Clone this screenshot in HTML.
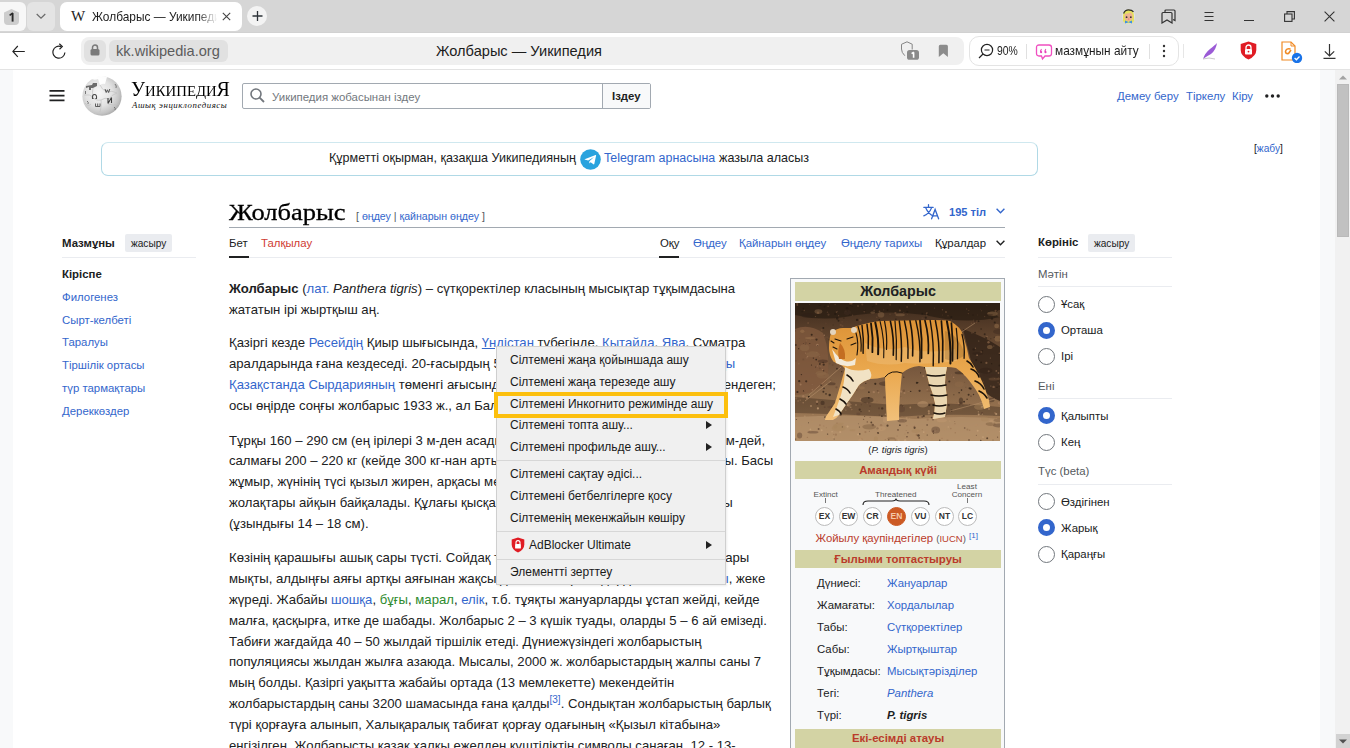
<!DOCTYPE html>
<html><head><meta charset="utf-8">
<style>
*{box-sizing:border-box;margin:0;padding:0}
html,body{width:1350px;height:748px;overflow:hidden;background:#fff}
body{position:relative;font-family:"Liberation Sans",sans-serif;color:#202122}
.a{position:absolute;white-space:nowrap}
a,.l{color:#3366cc;text-decoration:none}
.ln b{font-weight:bold}
.red{color:#ba0000}
/* chrome */
#tabbar{position:absolute;left:0;top:0;width:1350px;height:33px;background:#d6d6d6;border-bottom:1px solid #d1d1d1}
#toolbar{position:absolute;left:0;top:32.5px;width:1350px;height:36.5px;background:#fff;border-radius:6px 6px 0 0}
#tbsep{position:absolute;left:0;top:69px;width:1350px;height:1px;background:#e3e3e3}
#page{position:absolute;left:0;top:70px;width:1350px;height:678px;background:#fff;overflow:hidden}
.ln{position:absolute;left:229px;white-space:nowrap;font-size:13.14px;line-height:21px;height:21px}
.tx{font-size:13px}
.sb{font-size:11.4px}
.radio{position:absolute;width:17px;height:17px;border-radius:50%;border:1px solid #72777d;background:#fff}
.radio.on{border:5px solid #3366cc}
.mi{position:absolute;left:510px;font-size:12px;color:#1a1a1a;white-space:nowrap;line-height:14px}
.arr{position:absolute;left:706px;width:0;height:0;border-left:6px solid #222;border-top:4.5px solid transparent;border-bottom:4.5px solid transparent}
.msep{position:absolute;left:497px;width:228px;height:1px;background:#d7d7d7}
.ib-h{position:absolute;left:795px;width:206px;background:#d3d3a4;text-align:center;font-weight:bold;white-space:nowrap}
.ibl{position:absolute;left:817px;font-size:11.4px;white-space:nowrap}
.ibv{position:absolute;left:887px;font-size:11.4px;white-space:nowrap}
.circ{position:absolute;width:19px;height:19px;border-radius:50%;border:1px solid #bbb;background:#fff;font-size:8.5px;font-weight:bold;text-align:center;line-height:17px;color:#333}
</style></head><body>

<!-- TAB BAR -->
<div id="tabbar"></div>
<div class="a" style="left:0;top:2px;width:26px;height:29px;background:#f7f7f7;border-radius:0 6px 6px 0"></div>
<div class="a" style="left:27px;top:2px;width:28px;height:29px;background:#e4e4e4;border-radius:6px"></div>
<div class="a" style="left:60px;top:2px;width:182px;height:29px;background:#fff;border-radius:7px"></div>
<div id="toolbar"></div>
<div id="tbsep"></div>

<!-- tab count -->
<div class="a" style="left:4px;top:9px;width:15px;height:16px;background:#cdcdcd;border-radius:3px 3px 4px 4px;clip-path:polygon(50% 0,100% 22%,100% 100%,0 100%,0 22%)"></div>
<svg class="a" style="left:4px;top:9px" width="15" height="16" viewBox="0 0 15 16"><path d="M8.6 4.2 V12.6" stroke="#2a2a2a" stroke-width="1.9"/><path d="M8.9 4 L5.6 6.4" stroke="#2a2a2a" stroke-width="1.6"/></svg>
<svg class="a" style="left:36px;top:13px" width="10" height="7" viewBox="0 0 10 7"><path d="M0.7 1 L5 5.2 L9.3 1" fill="none" stroke="#6a6a6a" stroke-width="1.2"/></svg>
<!-- tab -->
<div class="a" style="left:71px;top:9px;font-family:'Liberation Serif',serif;font-size:15px;line-height:15px;color:#222;letter-spacing:-2.2px">W<span style="letter-spacing:0"></span></div>
<div class="a" style="left:92px;top:10.7px;font-size:11.9px;line-height:12px;color:#1c1c1c;width:128px;overflow:hidden;-webkit-mask-image:linear-gradient(90deg,#000 82%,transparent 98%)">Жолбарыс — Уикипедия</div>
<svg class="a" style="left:222px;top:12px" width="9" height="9" viewBox="0 0 9 9"><path d="M0.8 0.8 L8.2 8.2 M8.2 0.8 L0.8 8.2" stroke="#444" stroke-width="1.1"/></svg>
<div class="a" style="left:247px;top:6px;width:20px;height:20px;border-radius:50%;background:#f3f3f3"></div>
<svg class="a" style="left:252px;top:11px" width="11" height="10" viewBox="0 0 11 10"><path d="M0.5 5 H10.5 M5.5 0 V10" stroke="#2d3339" stroke-width="1.3"/></svg>
<!-- right icons tab bar -->
<svg class="a" style="left:1121px;top:8px" width="15" height="17" viewBox="0 0 15 17"><ellipse cx="7.5" cy="8.5" rx="6.6" ry="7.8" fill="#e9e9ef" opacity="0.6"/><path d="M2 8 Q2 1.5 7.5 1.5 Q13 1.5 13 8 L13 13 Q12 15.5 7.5 15.5 Q3 15.5 2 13 Z" fill="#e6e25e"/><path d="M2.6 5.5 Q4 1.8 7.5 1.8 Q11 1.8 12.5 3.8" stroke="#2b2b2b" stroke-width="1.2" fill="none"/><path d="M4 6 Q7 5.5 10 4.5 Q11.6 6 11.6 9 Q11 13 7.5 13 Q4 13 3.6 9 Q3.6 7 4 6 Z" fill="#eeb193"/><circle cx="5.6" cy="9.2" r="0.9" fill="#333"/><circle cx="9.8" cy="9.2" r="0.9" fill="#333"/><circle cx="7.7" cy="11" r="0.6" fill="#e0607a"/><path d="M4 12.5 L7.5 14 L11 12.5 L11 15.5 L7.5 14.3 L4 15.5 Z" fill="#3c8fe6"/></svg>

<svg class="a" style="left:1161px;top:9px" width="15" height="15" viewBox="0 0 15 15"><path d="M4 3.5 V2 Q4 1 5 1 H13 Q14 1 14 2 V11.5 L12 10.5" fill="none" stroke="#333" stroke-width="1.2"/><path d="M1 4.5 Q1 3.5 2 3.5 H10 Q11 3.5 11 4.5 V14 L6 11 L1 14 Z" fill="none" stroke="#333" stroke-width="1.2"/></svg>
<svg class="a" style="left:1204px;top:11px" width="10" height="11" viewBox="0 0 10 11"><path d="M0.5 1.5 H9.5 M0.5 5.5 H9.5 M0.5 9.5 H9.5" stroke="#333" stroke-width="1.1"/></svg>
<div class="a" style="left:1244px;top:20px;width:10px;height:1.1px;background:#333"></div>
<svg class="a" style="left:1284px;top:11px" width="11" height="11" viewBox="0 0 11 11"><rect x="0.6" y="3" width="7.4" height="7.4" fill="none" stroke="#333" stroke-width="1.1"/><path d="M3 3 V0.6 H10.4 V8 H8" fill="none" stroke="#333" stroke-width="1.1"/></svg>
<svg class="a" style="left:1324px;top:11px" width="11" height="11" viewBox="0 0 11 11"><path d="M0.6 0.6 L10.4 10.4 M10.4 0.6 L0.6 10.4" stroke="#333" stroke-width="1.1"/></svg>

<!-- toolbar -->
<svg class="a" style="left:12px;top:45px" width="14" height="13" viewBox="0 0 14 13"><path d="M5.8 1 L0.9 6.4 L5.8 11.8" fill="none" stroke="#222" stroke-width="1.15"/><path d="M1 6.5 H12.8" stroke="#222" stroke-width="1"/></svg>
<svg class="a" style="left:52px;top:43px" width="15" height="16" viewBox="0 0 15 16"><path d="M12.9 9.5 A6 6 0 1 1 9.2 3.6" fill="none" stroke="#222" stroke-width="1.2"/><path d="M7.3 0.8 L10.3 3.6 L7.5 6.2" fill="none" stroke="#222" stroke-width="1.2"/></svg>
<div class="a" style="left:81px;top:36.5px;width:883px;height:28.5px;background:#f0f0f0;border-radius:8px"></div>
<div class="a" style="left:84px;top:40px;width:22px;height:22px;background:#e1e1e1;border-radius:6px"></div>
<svg class="a" style="left:90px;top:44px" width="10" height="12" viewBox="0 0 10 12"><path d="M2.5 5 V3.5 A2.5 2.5 0 0 1 7.5 3.5 V5" fill="none" stroke="#7a7a7a" stroke-width="1.5"/><rect x="0.5" y="5" width="9" height="6.5" rx="1.5" fill="#7a7a7a"/></svg>
<div class="a" style="left:109px;top:40px;width:119px;height:22px;background:#e1e1e1;border-radius:6px"></div>
<div class="a" style="left:116px;top:42px;font-size:14.6px;color:#5c5c5c;line-height:18px">kk.wikipedia.org</div>
<div class="a" style="left:436px;top:42px;font-size:14.6px;color:#1c1c1c;line-height:18px">Жолбарыс — Уикипедия</div>
<svg class="a" style="left:900px;top:41px" width="21" height="20" viewBox="0 0 21 20"><path d="M7 0.8 L12.2 3.2 V8.5 M4.8 14.7 Q1.5 11.5 1.5 8 V3.3 L7 0.8" fill="none" stroke="#858585" stroke-width="1"/><rect x="7" y="9" width="12" height="9.8" rx="2.6" fill="#8a8a8a"/><path d="M13.6 11.2 V16.8 M13.8 11.2 L11.6 12.6" stroke="#fff" stroke-width="1.6"/></svg>
<svg class="a" style="left:938px;top:44px" width="11" height="14" viewBox="0 0 11 14"><path d="M0.8 2.2 Q0.8 0.7 2.3 0.7 H8.4 Q9.9 0.7 9.9 2.2 V13 L5.35 9.2 L0.8 13 Z" fill="#8c8c8c"/></svg>
<div class="a" style="left:969px;top:36px;width:210px;height:30px;background:#fff;border:1px solid #e4e4e4;border-radius:10px"></div>
<svg class="a" style="left:978px;top:43px" width="16" height="16" viewBox="0 0 16 16"><circle cx="9" cy="7" r="5.6" fill="none" stroke="#222" stroke-width="1.2"/><path d="M6.5 7 H11.5 M5 11 L1 15" stroke="#222" stroke-width="1.2"/></svg>
<div class="a" style="left:996.5px;top:44.5px;font-size:12.4px;line-height:13px;color:#1c1c1c;transform-origin:0 0;transform:scaleX(0.84)">90%</div>
<div class="a" style="left:1026px;top:44px;width:1px;height:15px;background:#e0e0e0"></div>
<svg class="a" style="left:1035px;top:44px" width="18" height="17" viewBox="0 0 18 17"><path d="M4 1 H14 Q16.5 1 16.5 3.5 V9.5 Q16.5 12 14 12 H10 L7.5 15 L6.5 12 H4 Q1.5 12 1.5 9.5 V3.5 Q1.5 1 4 1 Z" fill="none" stroke="#f04fc0" stroke-width="1.3"/><path d="M6.2 4.8 Q4.8 6 5 8 A1.1 1.1 0 1 0 6.4 7 Q6.2 6 6.9 5.3 Z M10.6 4.8 Q9.2 6 9.4 8 A1.1 1.1 0 1 0 10.8 7 Q10.6 6 11.3 5.3 Z" fill="#e83fb8"/></svg>
<div class="a" style="left:1054.5px;top:44px;font-size:12.8px;line-height:13px;color:#1c1c1c;transform-origin:0 0;transform:scaleX(0.925)">мазмұнын айту</div>
<div class="a" style="left:1149px;top:44px;width:1px;height:15px;background:#e0e0e0"></div>
<svg class="a" style="left:1162px;top:44px" width="4" height="14" viewBox="0 0 4 14"><circle cx="2" cy="2" r="1.2" fill="#333"/><circle cx="2" cy="7" r="1.2" fill="#333"/><circle cx="2" cy="12" r="1.2" fill="#333"/></svg>
<div class="a" style="left:1183px;top:44px;width:1px;height:14px;background:#e6e6e6"></div>
<svg class="a" style="left:1201px;top:42px" width="18" height="19" viewBox="0 0 18 19"><path d="M16 1 Q14 3 9 7 Q4 11 2 17 Q6 14 10 12 Q15 8 16 1 Z" fill="#9b5bd6"/><path d="M2 17 Q8 15 14 17" stroke="#bbb" stroke-width="0.8" fill="none"/></svg>
<svg class="a" style="left:1240px;top:41px" width="17" height="19" viewBox="0 0 17 19"><path d="M8.5 0.5 L16.3 3 V9 Q16.3 15 8.5 18.5 Q0.7 15 0.7 9 V3 Z" fill="#e01c24"/><path d="M6 8 V6.5 A2.5 2.5 0 0 1 11 6.5 V8" fill="none" stroke="#fff" stroke-width="1.3"/><rect x="5" y="8" width="7" height="5.5" rx="0.8" fill="#fff"/><circle cx="8.5" cy="10.6" r="0.9" fill="#e01c24"/></svg>
<svg class="a" style="left:1281px;top:41px" width="24" height="22" viewBox="0 0 24 22"><path d="M1 1 H10 L14 5 V19 H1 Z" fill="#fff" stroke="#f08a24" stroke-width="1.2"/><path d="M10 1 V5 H14" fill="none" stroke="#f08a24" stroke-width="1"/><path d="M9.5 8 Q5 7 4.5 10.5 Q4.5 13 7.5 12.5 L10 9" fill="none" stroke="#f08a24" stroke-width="1.6"/><circle cx="16" cy="17" r="5.2" fill="#1a73e8"/><path d="M13.6 17 L15.4 18.8 L18.5 15.5" fill="none" stroke="#fff" stroke-width="1.3"/></svg>
<svg class="a" style="left:1323px;top:44px" width="13" height="15" viewBox="0 0 13 15"><path d="M6.5 0 V12 M1.8 7.3 L6.5 12 L11.2 7.3 M0.5 14.3 H12.5" fill="none" stroke="#333" stroke-width="1.2"/></svg>


<!-- PAGE -->
<div id="page"></div>
<div class="a" style="left:0;top:70px;width:13px;height:678px;background:#f8f9fa"></div>
<div class="a" style="left:1320px;top:70px;width:15px;height:678px;background:#f8f9fa"></div>
<div class="a" style="left:1335px;top:70px;width:15px;height:678px;background:#f1f1f1"></div>
<div class="a" style="left:1337px;top:84px;width:12px;height:153px;background:#c1c1c1;border:0.5px solid #b9b9b9"></div>
<svg class="a" style="left:1339px;top:75px" width="8" height="5" viewBox="0 0 8 5"><path d="M0 4.5 L4 0.5 L8 4.5 Z" fill="#a3a3a3"/></svg>
<div class="a" style="left:1336px;top:734px;width:14px;height:14px;background:#d2d2d2"></div>
<svg class="a" style="left:1339px;top:739px" width="8" height="5" viewBox="0 0 8 5"><path d="M0 0.5 L4 4.5 L8 0.5 Z" fill="#505050"/></svg>


<!-- ===== WIKI HEADER ===== -->
<svg class="a" style="left:49px;top:89px" width="16" height="13" viewBox="0 0 16 13"><path d="M0.5 1.8 H15.5 M0.5 6.6 H15.5 M0.5 11.4 H15.5" stroke="#202122" stroke-width="1.7"/></svg>
<svg class="a" style="left:81px;top:75px" width="42" height="42" viewBox="0 0 42 42">
<defs><radialGradient id="gl" cx="42%" cy="42%" r="62%"><stop offset="0" stop-color="#f7f7f7"/><stop offset="0.55" stop-color="#e2e2e2"/><stop offset="0.85" stop-color="#c4c4c4"/><stop offset="1" stop-color="#a8a8a8"/></radialGradient></defs>
<circle cx="21" cy="21.2" r="19.6" fill="url(#gl)"/>
<path d="M9 3 Q13 6 17 4 L19 10 Q22 8 24 9 L26 2 Q22 0.5 17 1.2 Z" fill="#fff" opacity="0.95"/>
<path d="M5 11 L11 10 L12 8 L16 8 L16 11 L14 12 L12 13 L10 13 L10 15 L8 15 L8 12 L5 13 Z" fill="#6b6b6b"/>
<path d="M3 20 Q9 19 12 22 Q14 26 20 25 M20 25 Q24 22 28 24 M19 10 Q21 15 26 17 Q31 15 36 18 M20 25 Q21 31 19 37 M27 29 Q32 31 38 29 M10 29 Q7 32 4 28 M12 22 Q11 17 12 13 M28 24 Q30 20 36 18" stroke="#c2c2c2" stroke-width="0.7" fill="none"/>
<path d="M11.5 23.5 Q11 19.5 13.5 19.5 Q16 19.5 15.5 23.5 M11 23.5 H12.6 M14.4 23.5 H16" stroke="#4a4a4a" stroke-width="1.1" fill="none"/>
<path d="M24 14 L25.2 17.5 L26.4 14.8 L27.6 17.5 L28.8 14" stroke="#555" stroke-width="1" fill="none"/>
<path d="M27 23 V28.5 M30.5 22.5 V28 M27 28.5 L30.5 22.5" stroke="#3f3f3f" stroke-width="1.1" fill="none"/>
<path d="M14.5 28.5 V31.5 H19 V28.5 M16.7 28.5 V31.5" stroke="#4f4f4f" stroke-width="0.9" fill="none"/>
<path d="M4.5 16 V19 M34 9 Q36 11 35 13 M33 32 Q35 33 34 35 M6 26 Q8 27 7 29" stroke="#777" stroke-width="1" fill="none"/>
</svg>
<div class="a" style="left:131px;top:79px;font-family:'Liberation Serif',serif;color:#000;line-height:20px;transform-origin:0 0;transform:scaleX(0.971)"><span style="font-size:20.5px">У</span><span style="font-size:15.2px">ИКИПЕДИ</span><span style="font-size:20.5px">Я</span></div>
<div class="a" style="left:132px;top:100.8px;font-family:'Liberation Serif',serif;font-style:italic;font-size:8.8px;letter-spacing:0.55px;line-height:9px;color:#111">Ашық энциклопедиясы</div>

<div class="a" style="left:242px;top:83px;width:409px;height:26px;border:1px solid #a2a9b1;border-radius:2px;background:#fff"></div>
<div class="a" style="left:602px;top:84px;width:48px;height:24px;background:#f8f9fa;border-left:1px solid #a2a9b1"></div>
<svg class="a" style="left:250px;top:88px" width="15" height="15" viewBox="0 0 15 15"><circle cx="6" cy="6" r="5" fill="none" stroke="#72777d" stroke-width="1.6"/><path d="M9.6 9.6 L14 14" stroke="#72777d" stroke-width="1.8"/></svg>
<div class="a" style="left:272px;top:90.5px;font-size:11.45px;line-height:12px;color:#72777d">Уикипедия жобасынан іздеу</div>
<div class="a" style="left:612px;top:90px;font-size:11.4px;line-height:12px;font-weight:bold;color:#202122">Іздеу</div>

<div class="a l" style="left:1117px;top:90px;font-size:11.4px;line-height:12px">Демеу беру</div>
<div class="a l" style="left:1186px;top:90px;font-size:11.4px;line-height:12px">Тіркелу</div>
<div class="a l" style="left:1232px;top:90px;font-size:11.4px;line-height:12px">Кіру</div>
<svg class="a" style="left:1265px;top:94px" width="15" height="4" viewBox="0 0 15 4"><circle cx="1.8" cy="2" r="1.7" fill="#202122"/><circle cx="7.5" cy="2" r="1.7" fill="#202122"/><circle cx="13.2" cy="2" r="1.7" fill="#202122"/></svg>

<!-- banner -->
<div class="a" style="left:101px;top:142px;width:937px;height:34px;border:1px solid #b0d9e6;border-top-color:#cfe8ef;border-radius:7px;background:#fff"></div>
<div class="a" style="left:329px;top:152px;font-size:12.55px;line-height:13px;color:#202122">Құрметті оқырман, қазақша Уикипедияның</div>
<svg class="a" style="left:580px;top:148.5px" width="21" height="21" viewBox="0 0 21 21"><circle cx="10.5" cy="10.5" r="10.3" fill="#2aa3de"/><path d="M4.6 10.2 L15.6 6 Q16.3 5.8 16.1 6.6 L14.3 15 Q14.1 15.7 13.4 15.3 L10.6 13.3 L9.2 14.6 L9.4 12.2 L14 8 L8.2 11.6 L5.4 10.8 Q4.3 10.5 4.6 10.2 Z" fill="#fff"/></svg>
<div class="a l" style="left:604px;top:152px;font-size:12.45px;line-height:13px">Telegram арнасына</div>
<div class="a" style="left:719px;top:152px;font-size:12.55px;line-height:13px;color:#202122">жазыла аласыз</div>
<div class="a" style="left:1254px;top:143px;font-size:10.2px;line-height:11px;color:#202122">[<span class="l">жабу</span>]</div>

<!-- title -->
<div class="a" style="left:229px;top:198.6px;font-family:'Liberation Serif',serif;font-size:23.8px;line-height:26px;color:#000;-webkit-text-stroke:0.3px #000;transform-origin:0 0;transform:scaleX(1.113)">Жолбарыс</div>
<div class="a" style="left:356px;top:211px;font-size:10.6px;line-height:11px;color:#54595d">[ <span class="l">өңдеу</span> | <span class="l">қайнарын өңдеу</span> ]</div>
<svg class="a" style="left:922px;top:203px" width="20" height="18" viewBox="0 0 20 18"><path d="M1.8 4.3 H11.2 M6.5 1.6 V4.3 M3.6 4.6 Q6 10.5 11 13 M9.6 4.6 Q7.5 10.5 1.8 12.8" stroke="#3366cc" stroke-width="1.25" fill="none" stroke-linecap="round"/><path d="M9.6 15.8 L13.1 6.4 L16.6 15.8 M10.7 12.8 H15.5" stroke="#3366cc" stroke-width="1.3" fill="none" stroke-linecap="round"/></svg>
<div class="a l" style="left:949px;top:205.5px;font-size:11.1px;line-height:12px;font-weight:bold">195 тіл</div>
<svg class="a" style="left:996px;top:208px" width="9" height="6" viewBox="0 0 9 6"><path d="M0.6 0.8 L4.5 4.7 L8.4 0.8" stroke="#3366cc" stroke-width="1.4" fill="none"/></svg>
<div class="a" style="left:229px;top:227px;width:776px;height:1px;background:#a2a9b1"></div>

<!-- tabs -->
<div class="a" style="left:229px;top:237.4px;font-size:11.4px;line-height:12px;color:#202122">Бет</div>
<div class="a" style="left:261px;top:237.4px;font-size:11.4px;line-height:12px;color:#cf3b32">Талқылау</div>
<div class="a" style="left:660px;top:237.4px;font-size:11.4px;line-height:12px;color:#202122">Оқу</div>
<div class="a l" style="left:693px;top:237.4px;font-size:11.4px;line-height:12px">Өңдеу</div>
<div class="a l" style="left:739px;top:237.4px;font-size:11.4px;line-height:12px">Қайнарын өңдеу</div>
<div class="a l" style="left:841px;top:237.4px;font-size:11.4px;line-height:12px">Өңделу тарихы</div>
<div class="a" style="left:935px;top:237.4px;font-size:11.4px;line-height:12px;color:#202122">Құралдар</div>
<svg class="a" style="left:996px;top:240px" width="9" height="6" viewBox="0 0 9 6"><path d="M0.6 0.8 L4.5 4.7 L8.4 0.8" stroke="#202122" stroke-width="1.4" fill="none"/></svg>
<div class="a" style="left:229px;top:257px;width:776px;height:1px;background:#eaecf0"></div>
<div class="a" style="left:229px;top:256px;width:20px;height:2px;background:#202122"></div>
<div class="a" style="left:659px;top:256px;width:20px;height:2px;background:#202122"></div>

<!-- left TOC -->
<div class="a" style="left:62px;top:237px;font-size:11.4px;line-height:12px;font-weight:bold">Мазмұны</div>
<div class="a" style="left:125px;top:234px;width:47px;height:18px;background:#eaecf0;border-radius:2px"></div>
<div class="a" style="left:131px;top:238px;font-size:10.1px;line-height:11px;color:#202122">жасыру</div>
<div class="a" style="left:62px;top:257px;width:134px;height:1px;background:#eaecf0"></div>
<div class="a" style="left:62px;top:268px;font-size:11.4px;line-height:12px;font-weight:bold">Кіріспе</div>
<div class="a l" style="left:62px;top:291px;font-size:11.4px;line-height:12px">Филогенез</div>
<div class="a l" style="left:62px;top:314px;font-size:11.4px;line-height:12px">Сырт-келбеті</div>
<div class="a l" style="left:62px;top:336px;font-size:11.4px;line-height:12px">Таралуы</div>
<div class="a l" style="left:62px;top:359px;font-size:11.4px;line-height:12px">Тіршілік ортасы</div>
<div class="a l" style="left:62px;top:382px;font-size:11.4px;line-height:12px">түр тармақтары</div>
<div class="a l" style="left:62px;top:405px;font-size:11.4px;line-height:12px">Дереккөздер</div>

<!-- right appearance -->
<div class="a" style="left:1038px;top:236px;font-size:11.4px;line-height:12px;font-weight:bold">Көрініс</div>
<div class="a" style="left:1088px;top:234px;width:47px;height:18px;background:#eaecf0;border-radius:2px"></div>
<div class="a" style="left:1094px;top:238px;font-size:10.1px;line-height:11px;color:#202122">жасыру</div>
<div class="a" style="left:1038px;top:257px;width:134px;height:1px;background:#eaecf0"></div>
<div class="a" style="left:1038px;top:268px;font-size:11.4px;line-height:12px;color:#54595d">Мәтін</div>
<div class="a" style="left:1038px;top:286px;width:134px;height:1px;background:#eaecf0"></div>
<div class="radio" style="left:1038px;top:296px"></div><div class="a" style="left:1061px;top:298px;font-size:11.4px;line-height:12px">Ұсақ</div>
<div class="radio on" style="left:1038px;top:322px"></div><div class="a" style="left:1061px;top:324px;font-size:11.4px;line-height:12px">Орташа</div>
<div class="radio" style="left:1038px;top:348px"></div><div class="a" style="left:1061px;top:350px;font-size:11.4px;line-height:12px">Ірі</div>
<div class="a" style="left:1038px;top:380px;font-size:11.4px;line-height:12px;color:#54595d">Ені</div>
<div class="a" style="left:1038px;top:398px;width:134px;height:1px;background:#eaecf0"></div>
<div class="radio on" style="left:1038px;top:407px"></div><div class="a" style="left:1061px;top:410px;font-size:11.4px;line-height:12px">Қалыпты</div>
<div class="radio" style="left:1038px;top:434px"></div><div class="a" style="left:1061px;top:436px;font-size:11.4px;line-height:12px">Кең</div>
<div class="a" style="left:1038px;top:465px;font-size:11.4px;line-height:12px;color:#54595d">Түс (beta)</div>
<div class="a" style="left:1038px;top:484px;width:134px;height:1px;background:#eaecf0"></div>
<div class="radio" style="left:1038px;top:493px"></div><div class="a" style="left:1061px;top:496px;font-size:11.4px;line-height:12px">Өздігінен</div>
<div class="radio on" style="left:1038px;top:519px"></div><div class="a" style="left:1061px;top:522px;font-size:11.4px;line-height:12px">Жарық</div>
<div class="radio" style="left:1038px;top:546px"></div><div class="a" style="left:1061px;top:548px;font-size:11.4px;line-height:12px">Қараңғы</div>


<!-- ===== BODY TEXT ===== -->
<div class="ln" style="top:277.7px"><b>Жолбарыс</b> (<a>лат.</a> <i>Panthera tigris</i>) – сүтқоректілер класының мысықтар тұқымдасына</div>
<div class="ln" style="top:298.5px">жататын ірі жыртқыш аң.</div>
<div class="ln" style="top:332.2px">Қазіргі кезде <a>Ресейдің</a> Қиыр шығысында, <a style="text-decoration:underline">Үндістан</a> түбегінде, <a>Қытайда</a>, <a>Ява</a>, Суматра</div>
<div class="ln" style="top:353.0px">аралдарында ғана кездеседі. 20-ғасырдың 50-жылдарына дейін Орта</div>
<div class="ln" style="top:353.0px;left:auto;right:614.8px"><a>Азияда</a> <a>маңы</a></div>
<div class="ln" style="top:373.9px"><a>Қазақстанда</a> <a>Сырдарияның</a> төменгі ағысында, Іле, Шу өзендерінің</div>
<div class="ln" style="top:373.9px;left:auto;right:574.0px">бойында мекендеген;</div>
<div class="ln" style="top:394.7px">осы өңірде соңғы жолбарыс 1933 ж., ал Балқаш көлінің маңында</div>
<div class="ln" style="top:429.6px">Тұрқы 160 – 290 см (ең ірілері 3 м-ден асады), құйрығы 60 – 110</div>
<div class="ln" style="top:429.6px;left:auto;right:584.9px">биіктігі 1 м-дей,</div>
<div class="ln" style="top:450.4px">салмағы 200 – 220 кг (кейде 300 кг-нан артық). Аталығы ұрғашы</div>
<div class="ln" style="top:450.4px;left:auto;right:576.9px">ірілеу болады. Басы</div>
<div class="ln" style="top:471.2px">жұмыр, жүнінің түсі қызыл жирен, арқасы мен бүйірінде қара</div>
<div class="ln" style="top:492.0px">жолақтары айқын байқалады. Құлағы қысқа, ұшы дөңгелек, жалы</div>
<div class="ln" style="top:492.0px;left:auto;right:617.4px">қалың жалы</div>
<div class="ln" style="top:512.8px">(ұзындығы 14 – 18 см).</div>
<div class="ln" style="top:547.4px">Көзінің қарашығы ашық сары түсті. Сойдақ тістері өте үлкен, азу</div>
<div class="ln" style="top:547.4px;left:auto;right:600.7px">мен тырнақтары</div>
<div class="ln" style="top:568.2px">мықты, алдыңғы аяғы артқы аяғынан жақсы дамыған. Ормандарда</div>
<div class="ln" style="top:568.2px;left:auto;right:584.7px"><a>тоғайлы</a>, жеке</div>
<div class="ln" style="top:589.0px">жүреді. Жабайы <a>шошқа</a>, <a style="color:#2e8b2e">бұғы</a>, <a style="color:#2e8b2e">марал</a>, <a>елік</a>, т.б. тұяқты жануарларды ұстап жейді, кейде</div>
<div class="ln" style="top:609.8px">малға, қасқырға, итке де шабады. Жолбарыс 2 – 3 күшік туады, оларды 5 – 6 ай емізеді.</div>
<div class="ln" style="top:630.6px">Табиғи жағдайда 40 – 50 жылдай тіршілік етеді. Дүниежүзіндегі жолбарыстың</div>
<div class="ln" style="top:651.4px">популяциясы жылдан жылға азаюда. Мысалы, 2000 ж. жолбарыстардың жалпы саны 7</div>
<div class="ln" style="top:672.2px">мың болды. Қазіргі уақытта жабайы ортада (13 мемлекетте) мекендейтін</div>
<div class="ln" style="top:693.0px">жолбарыстардың саны 3200 шамасында ғана қалды<sup class="l" style="font-size:10px;vertical-align:5px;line-height:0">[3]</sup>. Сондықтан жолбарыстың барлық</div>
<div class="ln" style="top:713.8px">түрі қорғауға алынып, Халықаралық табиғат қорғау одағының «Қызыл кітабына»</div>
<div class="ln" style="top:734.6px">енгізілген. Жолбарысты қазақ халқы ежелден күштіліктің символы санаған. 12 - 13-</div>


<!-- ===== INFOBOX ===== -->
<div class="a" style="left:790px;top:278px;width:215px;height:480px;border:1px solid #a2a9b1;background:#f8f9fa"></div>
<div class="ib-h" style="top:282px;height:19px;font-size:14.3px;line-height:19px;color:#202122">Жолбарыс</div>
<svg class="a" style="left:795px;top:303px" width="205" height="138" viewBox="0 0 205 138" preserveAspectRatio="none">
<defs>
<linearGradient id="bg" x1="0" y1="0" x2="0" y2="1"><stop offset="0" stop-color="#3d2a1c"/><stop offset="0.22" stop-color="#5c412c"/><stop offset="0.5" stop-color="#7a5a3f"/><stop offset="0.75" stop-color="#93704e"/><stop offset="1" stop-color="#b08b64"/></linearGradient>
<linearGradient id="tg" x1="0" y1="0" x2="0" y2="1"><stop offset="0" stop-color="#dc9236"/><stop offset="0.5" stop-color="#eaa84e"/><stop offset="1" stop-color="#f1c07a"/></linearGradient>
</defs>
<rect width="205" height="138" fill="url(#bg)"/>
<path d="M0 0 H205 V14 Q170 22 130 12 Q90 6 50 14 Q25 18 0 12 Z" fill="#2a1d13" opacity="0.75"/>
<path d="M0 26 Q14 20 28 30 Q36 50 32 78 Q20 92 0 92 Z" fill="#80593d" opacity="0.8"/>
<path d="M168 26 Q190 34 205 44 V98 Q188 92 180 74 Z" fill="#2f2117" opacity="0.8"/>
<path d="M0 94 Q50 98 100 102 Q150 98 205 104 V113 Q150 110 100 114 Q50 111 0 110 Z" fill="#2b1e14" opacity="0.35"/>
<path d="M0 114 Q60 110 120 116 Q170 112 205 116 V138 H0 Z" fill="#b3906a" opacity="0.8"/>
<circle cx="16.5" cy="62.0" r="0.6" fill="#1f150e" opacity="0.7"/>
<circle cx="28.1" cy="59.4" r="0.6" fill="#1f150e" opacity="0.7"/>
<circle cx="181.3" cy="132.2" r="0.5" fill="#5e4230" opacity="0.7"/>
<circle cx="31.0" cy="90.9" r="0.8" fill="#2a1d14" opacity="0.7"/>
<circle cx="0.8" cy="57.8" r="0.9" fill="#6b4c34" opacity="0.7"/>
<circle cx="65.3" cy="17.3" r="1.2" fill="#6d4d35" opacity="0.7"/>
<circle cx="134.3" cy="102.1" r="1.1" fill="#3a281b" opacity="0.7"/>
<circle cx="159.9" cy="120.7" r="0.7" fill="#9a7453" opacity="0.7"/>
<circle cx="81.8" cy="14.3" r="0.7" fill="#6d4d35" opacity="0.7"/>
<circle cx="39.1" cy="135.9" r="0.5" fill="#3a281b" opacity="0.7"/>
<circle cx="69.7" cy="7.3" r="0.9" fill="#241911" opacity="0.7"/>
<circle cx="110.0" cy="131.0" r="0.4" fill="#9a7453" opacity="0.7"/>
<circle cx="179.2" cy="84.7" r="0.9" fill="#8a6548" opacity="0.7"/>
<circle cx="195.9" cy="83.1" r="0.5" fill="#a98060" opacity="0.7"/>
<circle cx="174.0" cy="137.0" r="0.8" fill="#3a281b" opacity="0.7"/>
<circle cx="153.7" cy="102.2" r="1.1" fill="#3a281b" opacity="0.7"/>
<circle cx="33.1" cy="3.2" r="0.7" fill="#6d4d35" opacity="0.7"/>
<circle cx="141.5" cy="126.2" r="0.6" fill="#9a7453" opacity="0.7"/>
<circle cx="131.8" cy="12.6" r="0.8" fill="#5a3f2c" opacity="0.7"/>
<circle cx="186.2" cy="49.1" r="0.8" fill="#8a6548" opacity="0.7"/>
<circle cx="45.7" cy="112.0" r="1.0" fill="#5e4230" opacity="0.7"/>
<circle cx="167.8" cy="102.1" r="0.6" fill="#5e4230" opacity="0.7"/>
<circle cx="101.0" cy="100.9" r="1.0" fill="#b38d66" opacity="0.7"/>
<circle cx="165.8" cy="99.8" r="1.2" fill="#6b4c34" opacity="0.7"/>
<circle cx="46.5" cy="27.1" r="0.8" fill="#241911" opacity="0.7"/>
<circle cx="202.0" cy="84.2" r="0.8" fill="#2a1d14" opacity="0.7"/>
<circle cx="133.9" cy="110.4" r="1.1" fill="#b38d66" opacity="0.7"/>
<circle cx="24.6" cy="53.6" r="0.8" fill="#8a6548" opacity="0.7"/>
<circle cx="36.6" cy="108.9" r="0.5" fill="#c9a47c" opacity="0.7"/>
<circle cx="194.0" cy="99.6" r="0.7" fill="#a98060" opacity="0.7"/>
<circle cx="194.1" cy="100.0" r="1.2" fill="#5e4230" opacity="0.7"/>
<circle cx="5.6" cy="81.5" r="1.0" fill="#a98060" opacity="0.7"/>
<circle cx="30.0" cy="114.1" r="0.9" fill="#3a281b" opacity="0.7"/>
<circle cx="71.8" cy="75.7" r="0.4" fill="#8a6548" opacity="0.7"/>
<circle cx="163.9" cy="100.2" r="0.8" fill="#b38d66" opacity="0.7"/>
<circle cx="191.4" cy="59.9" r="1.1" fill="#8a6548" opacity="0.7"/>
<circle cx="43.3" cy="34.8" r="0.8" fill="#6b4c34" opacity="0.7"/>
<circle cx="111.6" cy="115.1" r="1.1" fill="#b38d66" opacity="0.7"/>
<circle cx="119.6" cy="124.8" r="1.1" fill="#3a281b" opacity="0.7"/>
<circle cx="180.0" cy="18.0" r="0.8" fill="#241911" opacity="0.7"/>
<circle cx="3.8" cy="60.7" r="0.9" fill="#8a6548" opacity="0.7"/>
<circle cx="29.0" cy="85.4" r="0.8" fill="#2a1d14" opacity="0.7"/>
<circle cx="66.8" cy="71.5" r="0.8" fill="#1f150e" opacity="0.7"/>
<circle cx="159.2" cy="121.9" r="0.6" fill="#b38d66" opacity="0.7"/>
<circle cx="56.8" cy="106.6" r="0.8" fill="#9a7453" opacity="0.7"/>
<circle cx="5.7" cy="123.4" r="0.8" fill="#b38d66" opacity="0.7"/>
<circle cx="125.6" cy="69.8" r="0.6" fill="#1f150e" opacity="0.7"/>
<circle cx="56.8" cy="70.1" r="0.8" fill="#a98060" opacity="0.7"/>
<circle cx="50.8" cy="72.2" r="1.1" fill="#6b4c34" opacity="0.7"/>
<circle cx="183.0" cy="28.0" r="0.5" fill="#5a3f2c" opacity="0.7"/>
<circle cx="24.9" cy="61.0" r="0.9" fill="#2a1d14" opacity="0.7"/>
<circle cx="62.1" cy="16.9" r="1.2" fill="#241911" opacity="0.7"/>
<circle cx="51.9" cy="18.9" r="0.6" fill="#5a3f2c" opacity="0.7"/>
<circle cx="195.3" cy="55.0" r="0.5" fill="#a98060" opacity="0.7"/>
<circle cx="144.8" cy="137.2" r="0.7" fill="#3a281b" opacity="0.7"/>
<circle cx="40.1" cy="44.0" r="0.4" fill="#6b4c34" opacity="0.7"/>
<circle cx="3.7" cy="45.7" r="0.6" fill="#1f150e" opacity="0.7"/>
<circle cx="197.0" cy="15.6" r="1.2" fill="#241911" opacity="0.7"/>
<circle cx="21.5" cy="36.6" r="1.1" fill="#2a1d14" opacity="0.7"/>
<circle cx="37.2" cy="104.3" r="1.1" fill="#3a281b" opacity="0.7"/>
<circle cx="138.6" cy="130.5" r="0.5" fill="#3a281b" opacity="0.7"/>
<circle cx="188.4" cy="78.7" r="0.5" fill="#6b4c34" opacity="0.7"/>
<circle cx="11.8" cy="95.0" r="1.1" fill="#a98060" opacity="0.7"/>
<circle cx="55.1" cy="2.3" r="1.0" fill="#241911" opacity="0.7"/>
<circle cx="17.2" cy="118.2" r="0.6" fill="#b38d66" opacity="0.7"/>
<circle cx="24.9" cy="1.6" r="0.7" fill="#6d4d35" opacity="0.7"/>
<circle cx="187.7" cy="85.8" r="0.8" fill="#2a1d14" opacity="0.7"/>
<circle cx="48.9" cy="15.1" r="0.6" fill="#241911" opacity="0.7"/>
<circle cx="37.1" cy="128.7" r="0.8" fill="#c9a47c" opacity="0.7"/>
<circle cx="42.2" cy="61.5" r="0.6" fill="#8a6548" opacity="0.7"/>
<circle cx="164.8" cy="137.2" r="0.4" fill="#b38d66" opacity="0.7"/>
<circle cx="150.3" cy="76.0" r="0.8" fill="#8a6548" opacity="0.7"/>
<circle cx="50.4" cy="61.7" r="0.9" fill="#a98060" opacity="0.7"/>
<circle cx="111.9" cy="122.6" r="0.6" fill="#9a7453" opacity="0.7"/>
<circle cx="44.1" cy="31.7" r="1.1" fill="#8a6548" opacity="0.7"/>
<circle cx="144.9" cy="87.8" r="1.2" fill="#a98060" opacity="0.7"/>
<circle cx="201.3" cy="115.5" r="0.5" fill="#b38d66" opacity="0.7"/>
<circle cx="33.5" cy="11.7" r="1.1" fill="#5a3f2c" opacity="0.7"/>
<circle cx="49.7" cy="40.4" r="0.5" fill="#a98060" opacity="0.7"/>
<circle cx="55.2" cy="0.5" r="1.2" fill="#5a3f2c" opacity="0.7"/>
<circle cx="199.4" cy="75.5" r="0.4" fill="#8a6548" opacity="0.7"/>
<circle cx="180.9" cy="30.1" r="0.4" fill="#8a6548" opacity="0.7"/>
<circle cx="78.2" cy="65.5" r="0.9" fill="#1f150e" opacity="0.7"/>
<circle cx="50.9" cy="107.1" r="0.6" fill="#b38d66" opacity="0.7"/>
<circle cx="18.4" cy="55.1" r="0.7" fill="#2a1d14" opacity="0.7"/>
<circle cx="61.4" cy="86.9" r="0.9" fill="#2a1d14" opacity="0.7"/>
<circle cx="108.5" cy="103.6" r="0.7" fill="#9a7453" opacity="0.7"/>
<circle cx="66.9" cy="135.9" r="0.6" fill="#5e4230" opacity="0.7"/>
<circle cx="169.1" cy="98.7" r="0.9" fill="#1f150e" opacity="0.7"/>
<circle cx="150.4" cy="112.1" r="1.1" fill="#5e4230" opacity="0.7"/>
<circle cx="154.3" cy="78.5" r="1.1" fill="#2a1d14" opacity="0.7"/>
<circle cx="119.7" cy="123.2" r="0.5" fill="#5e4230" opacity="0.7"/>
<circle cx="8.6" cy="87.9" r="0.7" fill="#2a1d14" opacity="0.7"/>
<circle cx="92.5" cy="7.0" r="0.9" fill="#241911" opacity="0.7"/>
<circle cx="139.5" cy="67.5" r="0.8" fill="#2a1d14" opacity="0.7"/>
<circle cx="14.4" cy="128.7" r="0.5" fill="#9a7453" opacity="0.7"/>
<circle cx="107.8" cy="102.9" r="0.6" fill="#3a281b" opacity="0.7"/>
<circle cx="15.3" cy="36.6" r="0.6" fill="#8a6548" opacity="0.7"/>
<circle cx="173.3" cy="10.6" r="0.6" fill="#6d4d35" opacity="0.7"/>
<circle cx="9.6" cy="87.3" r="0.5" fill="#8a6548" opacity="0.7"/>
<circle cx="30.2" cy="35.0" r="0.9" fill="#6b4c34" opacity="0.7"/>
<circle cx="27.4" cy="66.6" r="0.6" fill="#a98060" opacity="0.7"/>
<circle cx="137.8" cy="95.5" r="0.6" fill="#a98060" opacity="0.7"/>
<circle cx="105.9" cy="64.1" r="1.0" fill="#a98060" opacity="0.7"/>
<circle cx="203.6" cy="75.8" r="1.2" fill="#6b4c34" opacity="0.7"/>
<circle cx="191.9" cy="2.4" r="0.5" fill="#5a3f2c" opacity="0.7"/>
<circle cx="103.9" cy="137.3" r="0.7" fill="#c9a47c" opacity="0.7"/>
<circle cx="187.9" cy="128.4" r="0.9" fill="#b38d66" opacity="0.7"/>
<circle cx="29.1" cy="72.3" r="0.5" fill="#6b4c34" opacity="0.7"/>
<circle cx="168.1" cy="70.2" r="1.0" fill="#2a1d14" opacity="0.7"/>
<circle cx="47.4" cy="123.9" r="0.7" fill="#3a281b" opacity="0.7"/>
<circle cx="32.6" cy="131.1" r="0.7" fill="#3a281b" opacity="0.7"/>
<circle cx="77.1" cy="16.7" r="0.4" fill="#5a3f2c" opacity="0.7"/>
<circle cx="153.9" cy="115.8" r="1.2" fill="#b38d66" opacity="0.7"/>
<circle cx="40.1" cy="1.6" r="0.6" fill="#6d4d35" opacity="0.7"/>
<circle cx="204.8" cy="81.3" r="1.1" fill="#6b4c34" opacity="0.7"/>
<circle cx="154.9" cy="117.9" r="0.5" fill="#c9a47c" opacity="0.7"/>
<circle cx="191.8" cy="34.4" r="0.7" fill="#6b4c34" opacity="0.7"/>
<circle cx="64.7" cy="106.7" r="1.1" fill="#3a281b" opacity="0.7"/>
<circle cx="166.5" cy="87.1" r="0.8" fill="#1f150e" opacity="0.7"/>
<circle cx="147.5" cy="6.8" r="0.7" fill="#6d4d35" opacity="0.7"/>
<circle cx="178.2" cy="67.0" r="0.5" fill="#1f150e" opacity="0.7"/>
<circle cx="61.0" cy="102.0" r="0.7" fill="#c9a47c" opacity="0.7"/>
<circle cx="48.9" cy="66.7" r="0.5" fill="#a98060" opacity="0.7"/>
<circle cx="131.9" cy="10.4" r="1.1" fill="#6d4d35" opacity="0.7"/>
<circle cx="185.8" cy="137.5" r="0.7" fill="#3a281b" opacity="0.7"/>
<circle cx="35.8" cy="76.7" r="0.6" fill="#6b4c34" opacity="0.7"/>
<circle cx="53.0" cy="78.6" r="1.0" fill="#2a1d14" opacity="0.7"/>
<circle cx="69.3" cy="8.6" r="0.9" fill="#5a3f2c" opacity="0.7"/>
<circle cx="73.8" cy="94.8" r="0.9" fill="#1f150e" opacity="0.7"/>
<circle cx="176.9" cy="29.8" r="1.1" fill="#5a3f2c" opacity="0.7"/>
<circle cx="78.8" cy="89.1" r="1.2" fill="#a98060" opacity="0.7"/>
<circle cx="174.0" cy="120.5" r="0.5" fill="#b38d66" opacity="0.7"/>
<circle cx="87.2" cy="105.4" r="1.2" fill="#3a281b" opacity="0.7"/>
<circle cx="100.4" cy="10.1" r="1.1" fill="#6d4d35" opacity="0.7"/>
<circle cx="199.3" cy="34.3" r="0.6" fill="#2a1d14" opacity="0.7"/>
<circle cx="31.2" cy="134.1" r="1.2" fill="#b38d66" opacity="0.7"/>
<circle cx="148.0" cy="89.3" r="0.5" fill="#a98060" opacity="0.7"/>
<circle cx="159.3" cy="0.2" r="0.6" fill="#241911" opacity="0.7"/>
<circle cx="188.6" cy="89.1" r="1.2" fill="#6b4c34" opacity="0.7"/>
<circle cx="128.4" cy="72.9" r="1.0" fill="#a98060" opacity="0.7"/>
<circle cx="23.0" cy="9.7" r="1.2" fill="#6d4d35" opacity="0.7"/>
<circle cx="39.3" cy="36.0" r="0.4" fill="#1f150e" opacity="0.7"/>
<circle cx="110.2" cy="137.5" r="1.2" fill="#c9a47c" opacity="0.7"/>
<circle cx="132.1" cy="122.0" r="0.8" fill="#3a281b" opacity="0.7"/>
<circle cx="112.1" cy="4.0" r="1.0" fill="#5a3f2c" opacity="0.7"/>
<circle cx="63.0" cy="3.0" r="1.1" fill="#5a3f2c" opacity="0.7"/>
<circle cx="132.7" cy="11.2" r="0.9" fill="#241911" opacity="0.7"/>
<circle cx="189.7" cy="31.3" r="1.0" fill="#2a1d14" opacity="0.7"/>
<circle cx="81.3" cy="0.9" r="1.0" fill="#5a3f2c" opacity="0.7"/>
<circle cx="198.8" cy="43.0" r="0.6" fill="#8a6548" opacity="0.7"/>
<circle cx="45.4" cy="104.9" r="0.5" fill="#c9a47c" opacity="0.7"/>
<circle cx="127.8" cy="84.2" r="0.8" fill="#8a6548" opacity="0.7"/>
<circle cx="186.6" cy="7.8" r="0.5" fill="#6d4d35" opacity="0.7"/>
<circle cx="199.7" cy="19.6" r="1.0" fill="#241911" opacity="0.7"/>
<circle cx="37.7" cy="62.1" r="1.0" fill="#6b4c34" opacity="0.7"/>
<circle cx="204.5" cy="128.6" r="0.6" fill="#c9a47c" opacity="0.7"/>
<circle cx="133.8" cy="72.4" r="0.4" fill="#a98060" opacity="0.7"/>
<circle cx="34.7" cy="0.4" r="0.5" fill="#5a3f2c" opacity="0.7"/>
<circle cx="86.1" cy="122.2" r="1.2" fill="#9a7453" opacity="0.7"/>
<circle cx="42.5" cy="49.2" r="1.1" fill="#6b4c34" opacity="0.7"/>
<circle cx="88.7" cy="6.8" r="0.6" fill="#5a3f2c" opacity="0.7"/>
<circle cx="66.3" cy="101.8" r="0.4" fill="#3a281b" opacity="0.7"/>
<circle cx="84.2" cy="112.0" r="0.4" fill="#3a281b" opacity="0.7"/>
<circle cx="7.1" cy="8.6" r="0.6" fill="#241911" opacity="0.7"/>
<circle cx="153.2" cy="124.0" r="0.7" fill="#c9a47c" opacity="0.7"/>
<circle cx="68.7" cy="131.6" r="0.6" fill="#b38d66" opacity="0.7"/>
<circle cx="56.5" cy="0.5" r="1.1" fill="#6d4d35" opacity="0.7"/>
<circle cx="130.0" cy="130.2" r="1.1" fill="#b38d66" opacity="0.7"/>
<circle cx="22.0" cy="98.7" r="1.2" fill="#a98060" opacity="0.7"/>
<circle cx="88.1" cy="68.1" r="0.5" fill="#a98060" opacity="0.7"/>
<circle cx="164.5" cy="101.9" r="0.9" fill="#5e4230" opacity="0.7"/>
<circle cx="74.2" cy="108.0" r="0.8" fill="#b38d66" opacity="0.7"/>
<circle cx="83.6" cy="89.6" r="0.8" fill="#a98060" opacity="0.7"/>
<circle cx="66.8" cy="135.3" r="1.2" fill="#b38d66" opacity="0.7"/>
<circle cx="54.3" cy="11.6" r="0.7" fill="#241911" opacity="0.7"/>
<circle cx="202.6" cy="134.2" r="0.6" fill="#5e4230" opacity="0.7"/>
<circle cx="85.5" cy="85.6" r="1.0" fill="#8a6548" opacity="0.7"/>
<circle cx="173.6" cy="91.7" r="1.0" fill="#2a1d14" opacity="0.7"/>
<circle cx="54.9" cy="35.1" r="0.6" fill="#6b4c34" opacity="0.7"/>
<circle cx="50.7" cy="33.9" r="0.6" fill="#8a6548" opacity="0.7"/>
<circle cx="186.1" cy="26.0" r="0.7" fill="#241911" opacity="0.7"/>
<circle cx="203.5" cy="70.0" r="0.9" fill="#8a6548" opacity="0.7"/>
<circle cx="20.6" cy="64.0" r="0.5" fill="#2a1d14" opacity="0.7"/>
<circle cx="97.3" cy="113.0" r="1.1" fill="#3a281b" opacity="0.7"/>
<circle cx="8.3" cy="40.5" r="0.4" fill="#2a1d14" opacity="0.7"/>
<circle cx="123.1" cy="114.3" r="1.1" fill="#5e4230" opacity="0.7"/>
<circle cx="76.3" cy="119.5" r="0.9" fill="#3a281b" opacity="0.7"/>
<circle cx="158.9" cy="91.7" r="0.5" fill="#2a1d14" opacity="0.7"/>
<circle cx="122.2" cy="85.6" r="0.4" fill="#8a6548" opacity="0.7"/>
<circle cx="69.7" cy="6.1" r="0.4" fill="#5a3f2c" opacity="0.7"/>
<circle cx="150.1" cy="126.1" r="1.1" fill="#b38d66" opacity="0.7"/>
<circle cx="127.3" cy="10.8" r="1.0" fill="#241911" opacity="0.7"/>
<circle cx="112.3" cy="8.7" r="1.0" fill="#241911" opacity="0.7"/>
<circle cx="109.5" cy="90.1" r="1.0" fill="#a98060" opacity="0.7"/>
<circle cx="63.1" cy="131.5" r="1.0" fill="#c9a47c" opacity="0.7"/>
<circle cx="181.2" cy="57.1" r="1.1" fill="#2a1d14" opacity="0.7"/>
<circle cx="204.3" cy="50.2" r="0.7" fill="#8a6548" opacity="0.7"/>
<circle cx="83.0" cy="130.0" r="1.1" fill="#3a281b" opacity="0.7"/>
<circle cx="86.9" cy="113.2" r="0.9" fill="#3a281b" opacity="0.7"/>
<circle cx="74.8" cy="106.7" r="0.4" fill="#5e4230" opacity="0.7"/>
<circle cx="113.1" cy="88.4" r="0.5" fill="#a98060" opacity="0.7"/>
<circle cx="58.1" cy="71.9" r="0.5" fill="#2a1d14" opacity="0.7"/>
<circle cx="100.6" cy="111.1" r="0.6" fill="#5e4230" opacity="0.7"/>
<circle cx="171.6" cy="6.0" r="0.7" fill="#5a3f2c" opacity="0.7"/>
<circle cx="124.6" cy="87.8" r="1.1" fill="#2a1d14" opacity="0.7"/>
<circle cx="127.2" cy="113.8" r="0.9" fill="#5e4230" opacity="0.7"/>
<circle cx="175.6" cy="85.7" r="1.1" fill="#1f150e" opacity="0.7"/>
<circle cx="44.7" cy="55.2" r="0.5" fill="#1f150e" opacity="0.7"/>
<circle cx="199.0" cy="112.6" r="0.4" fill="#5e4230" opacity="0.7"/>
<circle cx="115.3" cy="104.5" r="0.9" fill="#b38d66" opacity="0.7"/>
<circle cx="93.4" cy="117.2" r="0.9" fill="#c9a47c" opacity="0.7"/>
<circle cx="0.7" cy="136.1" r="0.6" fill="#3a281b" opacity="0.7"/>
<circle cx="156.5" cy="107.6" r="1.1" fill="#3a281b" opacity="0.7"/>
<circle cx="13.8" cy="49.5" r="0.5" fill="#6b4c34" opacity="0.7"/>
<circle cx="90.6" cy="70.4" r="0.4" fill="#2a1d14" opacity="0.7"/>
<circle cx="26.7" cy="127.3" r="1.0" fill="#c9a47c" opacity="0.7"/>
<circle cx="104.9" cy="7.5" r="1.1" fill="#6d4d35" opacity="0.7"/>
<circle cx="133.8" cy="108.2" r="1.1" fill="#b38d66" opacity="0.7"/>
<circle cx="204.2" cy="101.0" r="0.6" fill="#b38d66" opacity="0.7"/>
<circle cx="201.3" cy="67.9" r="0.9" fill="#8a6548" opacity="0.7"/>
<circle cx="170.8" cy="84.2" r="0.5" fill="#6b4c34" opacity="0.7"/>
<circle cx="183.8" cy="37.9" r="0.5" fill="#a98060" opacity="0.7"/>
<circle cx="103.0" cy="126.9" r="0.9" fill="#5e4230" opacity="0.7"/>
<circle cx="82.7" cy="87.8" r="0.9" fill="#6b4c34" opacity="0.7"/>
<circle cx="183.6" cy="23.3" r="0.5" fill="#5a3f2c" opacity="0.7"/>
<circle cx="108.8" cy="87.8" r="1.2" fill="#6b4c34" opacity="0.7"/>
<circle cx="92.9" cy="72.0" r="0.6" fill="#2a1d14" opacity="0.7"/>
<circle cx="109.8" cy="118.2" r="0.6" fill="#c9a47c" opacity="0.7"/>
<circle cx="203.1" cy="79.7" r="0.7" fill="#6b4c34" opacity="0.7"/>
<circle cx="16.7" cy="31.7" r="1.0" fill="#1f150e" opacity="0.7"/>
<circle cx="9.9" cy="113.1" r="0.6" fill="#c9a47c" opacity="0.7"/>
<circle cx="198.0" cy="120.1" r="1.0" fill="#c9a47c" opacity="0.7"/>
<circle cx="59.6" cy="86.3" r="0.8" fill="#a98060" opacity="0.7"/>
<circle cx="183.6" cy="18.2" r="0.9" fill="#241911" opacity="0.7"/>
<circle cx="9.3" cy="7.5" r="0.7" fill="#6d4d35" opacity="0.7"/>
<circle cx="21.8" cy="49.3" r="0.7" fill="#8a6548" opacity="0.7"/>
<circle cx="75.1" cy="114.3" r="0.5" fill="#5e4230" opacity="0.7"/>
<circle cx="192.0" cy="33.6" r="0.8" fill="#8a6548" opacity="0.7"/>
<circle cx="13.1" cy="20.0" r="1.0" fill="#6d4d35" opacity="0.7"/>
<circle cx="2.4" cy="89.0" r="1.1" fill="#1f150e" opacity="0.7"/>
<circle cx="121.9" cy="79.8" r="1.1" fill="#1f150e" opacity="0.7"/>
<circle cx="185.2" cy="6.1" r="0.4" fill="#6d4d35" opacity="0.7"/>
<circle cx="38.1" cy="22.0" r="0.4" fill="#241911" opacity="0.7"/>
<circle cx="112.9" cy="129.8" r="0.7" fill="#5e4230" opacity="0.7"/>
<circle cx="106.2" cy="88.7" r="1.1" fill="#a98060" opacity="0.7"/>
<circle cx="35.8" cy="42.7" r="0.9" fill="#6b4c34" opacity="0.7"/>
<circle cx="203.8" cy="100.0" r="1.0" fill="#a98060" opacity="0.7"/>
<circle cx="1.3" cy="116.5" r="0.5" fill="#3a281b" opacity="0.7"/>
<circle cx="204.3" cy="36.1" r="0.5" fill="#2a1d14" opacity="0.7"/>
<circle cx="182.7" cy="127.7" r="1.0" fill="#c9a47c" opacity="0.7"/>
<circle cx="54.5" cy="76.4" r="0.9" fill="#a98060" opacity="0.7"/>
<circle cx="188.0" cy="134.1" r="0.9" fill="#c9a47c" opacity="0.7"/>
<circle cx="197.9" cy="29.9" r="0.4" fill="#6d4d35" opacity="0.7"/>
<circle cx="53.4" cy="32.6" r="1.2" fill="#8a6548" opacity="0.7"/>
<circle cx="180.4" cy="45.3" r="0.7" fill="#8a6548" opacity="0.7"/>
<circle cx="174.6" cy="127.2" r="0.8" fill="#9a7453" opacity="0.7"/>
<circle cx="172.1" cy="96.3" r="0.7" fill="#2a1d14" opacity="0.7"/>
<circle cx="148.5" cy="78.7" r="1.0" fill="#6b4c34" opacity="0.7"/>
<circle cx="80.3" cy="80.8" r="1.1" fill="#1f150e" opacity="0.7"/>
<circle cx="29.6" cy="3.7" r="0.9" fill="#241911" opacity="0.7"/>
<circle cx="33.2" cy="134.9" r="0.4" fill="#b38d66" opacity="0.7"/>
<circle cx="28.4" cy="88.8" r="1.0" fill="#2a1d14" opacity="0.7"/>
<circle cx="151.0" cy="9.1" r="1.0" fill="#6d4d35" opacity="0.7"/>
<circle cx="40.9" cy="131.7" r="1.1" fill="#9a7453" opacity="0.7"/>
<circle cx="13.5" cy="119.8" r="0.5" fill="#3a281b" opacity="0.7"/>
<circle cx="42.2" cy="15.5" r="1.2" fill="#241911" opacity="0.7"/>
<circle cx="186.8" cy="104.0" r="1.1" fill="#b38d66" opacity="0.7"/>
<circle cx="20.5" cy="13.5" r="0.6" fill="#6d4d35" opacity="0.7"/>
<circle cx="4.3" cy="35.4" r="0.4" fill="#6b4c34" opacity="0.7"/>
<circle cx="155.8" cy="125.6" r="0.8" fill="#9a7453" opacity="0.7"/>
<circle cx="174.5" cy="85.3" r="1.0" fill="#2a1d14" opacity="0.7"/>
<circle cx="6.4" cy="71.6" r="0.7" fill="#2a1d14" opacity="0.7"/>
<circle cx="144.5" cy="74.2" r="1.0" fill="#8a6548" opacity="0.7"/>
<circle cx="169.7" cy="79.3" r="0.5" fill="#6b4c34" opacity="0.7"/>
<circle cx="0.3" cy="27.9" r="0.4" fill="#241911" opacity="0.7"/>
<circle cx="100.6" cy="67.8" r="1.2" fill="#8a6548" opacity="0.7"/>
<circle cx="121.5" cy="132.1" r="0.6" fill="#9a7453" opacity="0.7"/>
<circle cx="193.5" cy="39.2" r="1.2" fill="#8a6548" opacity="0.7"/>
<circle cx="47.5" cy="22.9" r="1.0" fill="#6d4d35" opacity="0.7"/>
<circle cx="100.5" cy="136.8" r="1.0" fill="#9a7453" opacity="0.7"/>
<circle cx="182.5" cy="11.9" r="0.4" fill="#6d4d35" opacity="0.7"/>
<circle cx="42.3" cy="36.3" r="0.8" fill="#1f150e" opacity="0.7"/>
<circle cx="77.8" cy="122.0" r="1.2" fill="#5e4230" opacity="0.7"/>
<circle cx="26.0" cy="82.0" r="0.9" fill="#1f150e" opacity="0.7"/>
<circle cx="31.8" cy="116.3" r="1.0" fill="#9a7453" opacity="0.7"/>
<circle cx="34.8" cy="60.6" r="0.9" fill="#6b4c34" opacity="0.7"/>
<circle cx="25.8" cy="63.8" r="0.8" fill="#8a6548" opacity="0.7"/>
<circle cx="54.8" cy="104.2" r="0.5" fill="#9a7453" opacity="0.7"/>
<circle cx="32.0" cy="34.2" r="0.9" fill="#6b4c34" opacity="0.7"/>
<circle cx="195.9" cy="35.7" r="0.5" fill="#2a1d14" opacity="0.7"/>
<circle cx="30.9" cy="20.5" r="1.0" fill="#5a3f2c" opacity="0.7"/>
<circle cx="130.8" cy="14.7" r="1.1" fill="#241911" opacity="0.7"/>
<circle cx="95.1" cy="1.7" r="1.0" fill="#5a3f2c" opacity="0.7"/>
<circle cx="102.6" cy="87.3" r="0.4" fill="#a98060" opacity="0.7"/>
<circle cx="52.7" cy="101.9" r="1.0" fill="#b38d66" opacity="0.7"/>
<circle cx="186.1" cy="59.3" r="0.9" fill="#1f150e" opacity="0.7"/>
<circle cx="132.7" cy="116.7" r="1.1" fill="#9a7453" opacity="0.7"/>
<circle cx="139.3" cy="88.5" r="0.7" fill="#a98060" opacity="0.7"/>
<circle cx="53.3" cy="96.7" r="0.6" fill="#a98060" opacity="0.7"/>
<circle cx="82.0" cy="98.3" r="0.6" fill="#8a6548" opacity="0.7"/>
<circle cx="138.4" cy="128.4" r="1.1" fill="#5e4230" opacity="0.7"/>
<circle cx="67.3" cy="1.5" r="1.1" fill="#5a3f2c" opacity="0.7"/>
<circle cx="21.8" cy="34.7" r="0.5" fill="#8a6548" opacity="0.7"/>
<circle cx="160.3" cy="129.8" r="0.7" fill="#9a7453" opacity="0.7"/>
<circle cx="42.0" cy="65.7" r="0.9" fill="#2a1d14" opacity="0.7"/>
<circle cx="169.9" cy="72.0" r="1.0" fill="#a98060" opacity="0.7"/>
<circle cx="93.7" cy="136.7" r="0.7" fill="#5e4230" opacity="0.7"/>
<circle cx="156.4" cy="16.9" r="0.7" fill="#6d4d35" opacity="0.7"/>
<circle cx="11.6" cy="37.9" r="0.4" fill="#a98060" opacity="0.7"/>
<circle cx="15.4" cy="126.3" r="0.9" fill="#c9a47c" opacity="0.7"/>
<circle cx="22.4" cy="41.9" r="1.2" fill="#a98060" opacity="0.7"/>
<circle cx="43.5" cy="17.8" r="1.0" fill="#241911" opacity="0.7"/>
<circle cx="130.0" cy="64.7" r="1.0" fill="#1f150e" opacity="0.7"/>
<circle cx="136.5" cy="114.6" r="0.8" fill="#3a281b" opacity="0.7"/>
<circle cx="60.3" cy="75.7" r="1.0" fill="#8a6548" opacity="0.7"/>
<circle cx="96.2" cy="108.1" r="0.6" fill="#5e4230" opacity="0.7"/>
<circle cx="0.6" cy="99.6" r="0.7" fill="#6b4c34" opacity="0.7"/>
<circle cx="99.4" cy="86.0" r="0.9" fill="#2a1d14" opacity="0.7"/>
<circle cx="74.3" cy="128.2" r="0.4" fill="#3a281b" opacity="0.7"/>
<circle cx="169.7" cy="125.0" r="0.8" fill="#5e4230" opacity="0.7"/>
<circle cx="70.8" cy="80.4" r="0.6" fill="#2a1d14" opacity="0.7"/>
<circle cx="14.8" cy="40.4" r="0.5" fill="#1f150e" opacity="0.7"/>
<circle cx="29.3" cy="32.2" r="0.7" fill="#a98060" opacity="0.7"/>
<circle cx="31.3" cy="124.8" r="0.5" fill="#9a7453" opacity="0.7"/>
<circle cx="182.7" cy="84.0" r="0.9" fill="#2a1d14" opacity="0.7"/>
<circle cx="183.3" cy="108.8" r="0.6" fill="#c9a47c" opacity="0.7"/>
<circle cx="142.0" cy="73.2" r="0.9" fill="#a98060" opacity="0.7"/>
<circle cx="24.0" cy="16.3" r="0.6" fill="#5a3f2c" opacity="0.7"/>
<circle cx="28.6" cy="68.0" r="0.8" fill="#2a1d14" opacity="0.7"/>
<circle cx="185.6" cy="96.7" r="0.8" fill="#8a6548" opacity="0.7"/>
<circle cx="110.6" cy="119.1" r="0.5" fill="#b38d66" opacity="0.7"/>
<circle cx="65.7" cy="96.0" r="0.9" fill="#a98060" opacity="0.7"/>
<circle cx="85.9" cy="132.6" r="0.5" fill="#b38d66" opacity="0.7"/>
<circle cx="73.9" cy="89.2" r="0.9" fill="#2a1d14" opacity="0.7"/>
<circle cx="139.9" cy="128.5" r="1.0" fill="#c9a47c" opacity="0.7"/>
<circle cx="19.3" cy="66.8" r="0.4" fill="#8a6548" opacity="0.7"/>
<circle cx="147.2" cy="86.3" r="0.5" fill="#6b4c34" opacity="0.7"/>
<circle cx="159.6" cy="76.5" r="0.6" fill="#8a6548" opacity="0.7"/>
<circle cx="10.8" cy="39.9" r="1.1" fill="#6b4c34" opacity="0.7"/>
<circle cx="82.8" cy="69.5" r="1.1" fill="#6b4c34" opacity="0.7"/>
<circle cx="100.9" cy="16.3" r="0.7" fill="#241911" opacity="0.7"/>
<circle cx="61.3" cy="80.9" r="1.0" fill="#2a1d14" opacity="0.7"/>
<circle cx="8.2" cy="99.7" r="0.8" fill="#a98060" opacity="0.7"/>
<circle cx="10.2" cy="41.5" r="0.4" fill="#2a1d14" opacity="0.7"/>
<circle cx="168.5" cy="65.6" r="1.0" fill="#2a1d14" opacity="0.7"/>
<circle cx="186.5" cy="84.4" r="0.5" fill="#1f150e" opacity="0.7"/>
<circle cx="138.1" cy="95.1" r="0.6" fill="#2a1d14" opacity="0.7"/>
<circle cx="156.3" cy="14.0" r="1.1" fill="#241911" opacity="0.7"/>
<circle cx="86.4" cy="13.9" r="0.4" fill="#6d4d35" opacity="0.7"/>
<circle cx="178.7" cy="19.1" r="0.8" fill="#5a3f2c" opacity="0.7"/>
<circle cx="52.9" cy="41.7" r="0.4" fill="#a98060" opacity="0.7"/>
<circle cx="4.2" cy="78.2" r="1.1" fill="#1f150e" opacity="0.7"/>
<circle cx="11.2" cy="78.3" r="1.1" fill="#2a1d14" opacity="0.7"/>
<circle cx="13.8" cy="93.8" r="0.9" fill="#1f150e" opacity="0.7"/>
<circle cx="192.2" cy="135.3" r="1.0" fill="#3a281b" opacity="0.7"/>
<circle cx="112.5" cy="11.4" r="0.6" fill="#5a3f2c" opacity="0.7"/>
<circle cx="31.1" cy="2.1" r="0.4" fill="#241911" opacity="0.7"/>
<circle cx="137.2" cy="136.2" r="0.6" fill="#b38d66" opacity="0.7"/>
<circle cx="24.9" cy="65.2" r="1.0" fill="#6b4c34" opacity="0.7"/>
<circle cx="49.7" cy="101.2" r="1.1" fill="#5e4230" opacity="0.7"/>
<circle cx="75.0" cy="103.1" r="1.0" fill="#5e4230" opacity="0.7"/>
<circle cx="17.3" cy="86.7" r="0.8" fill="#a98060" opacity="0.7"/>
<circle cx="191.1" cy="35.1" r="1.0" fill="#2a1d14" opacity="0.7"/>
<circle cx="2.3" cy="2.0" r="0.9" fill="#6d4d35" opacity="0.7"/>
<circle cx="64.1" cy="82.8" r="0.9" fill="#a98060" opacity="0.7"/>
<circle cx="64.8" cy="130.9" r="0.8" fill="#3a281b" opacity="0.7"/>
<circle cx="34.1" cy="133.4" r="0.7" fill="#b38d66" opacity="0.7"/>
<circle cx="132.2" cy="86.9" r="0.8" fill="#a98060" opacity="0.7"/>
<circle cx="55.8" cy="104.2" r="0.6" fill="#c9a47c" opacity="0.7"/>
<circle cx="12.4" cy="134.4" r="0.7" fill="#9a7453" opacity="0.7"/>
<circle cx="124.2" cy="134.9" r="0.9" fill="#5e4230" opacity="0.7"/>
<circle cx="182.1" cy="52.0" r="0.9" fill="#a98060" opacity="0.7"/>
<circle cx="183.7" cy="111.4" r="1.0" fill="#c9a47c" opacity="0.7"/>
<circle cx="32.2" cy="127.0" r="0.6" fill="#b38d66" opacity="0.7"/>
<circle cx="28.8" cy="122.9" r="0.5" fill="#9a7453" opacity="0.7"/>
<circle cx="200.0" cy="110.0" r="0.9" fill="#9a7453" opacity="0.7"/>
<circle cx="187.3" cy="47.9" r="0.8" fill="#2a1d14" opacity="0.7"/>
<circle cx="161.5" cy="99.7" r="0.6" fill="#8a6548" opacity="0.7"/>
<circle cx="11.8" cy="54.6" r="1.1" fill="#8a6548" opacity="0.7"/>
<circle cx="120.2" cy="1.3" r="0.8" fill="#5a3f2c" opacity="0.7"/>
<circle cx="18.0" cy="111.3" r="0.6" fill="#b38d66" opacity="0.7"/>
<circle cx="118.8" cy="123.8" r="0.7" fill="#9a7453" opacity="0.7"/>
<circle cx="43.6" cy="12.7" r="0.6" fill="#6d4d35" opacity="0.7"/>
<circle cx="159.8" cy="118.3" r="0.4" fill="#5e4230" opacity="0.7"/>
<circle cx="204.4" cy="51.6" r="0.7" fill="#2a1d14" opacity="0.7"/>
<circle cx="95.0" cy="11.3" r="0.9" fill="#5a3f2c" opacity="0.7"/>
<circle cx="70.7" cy="71.7" r="0.5" fill="#2a1d14" opacity="0.7"/>
<circle cx="42.0" cy="120.2" r="0.8" fill="#9a7453" opacity="0.7"/>
<circle cx="194.0" cy="105.9" r="1.2" fill="#9a7453" opacity="0.7"/>
<circle cx="52.1" cy="5.2" r="1.2" fill="#241911" opacity="0.7"/>
<circle cx="77.5" cy="3.8" r="0.8" fill="#241911" opacity="0.7"/>
<circle cx="178.5" cy="63.2" r="1.1" fill="#2a1d14" opacity="0.7"/>
<circle cx="131.2" cy="127.3" r="0.6" fill="#b38d66" opacity="0.7"/>
<circle cx="115.7" cy="88.4" r="0.7" fill="#1f150e" opacity="0.7"/>
<circle cx="198.0" cy="136.9" r="0.5" fill="#5e4230" opacity="0.7"/>
<circle cx="193.1" cy="129.9" r="1.1" fill="#b38d66" opacity="0.7"/>
<circle cx="185.4" cy="115.5" r="0.6" fill="#b38d66" opacity="0.7"/>
<circle cx="105.2" cy="102.1" r="0.4" fill="#3a281b" opacity="0.7"/>
<circle cx="29.7" cy="104.2" r="0.9" fill="#5e4230" opacity="0.7"/>
<circle cx="61.3" cy="81.6" r="0.8" fill="#2a1d14" opacity="0.7"/>
<circle cx="90.5" cy="111.4" r="0.8" fill="#b38d66" opacity="0.7"/>
<circle cx="187.1" cy="110.2" r="1.1" fill="#5e4230" opacity="0.7"/>
<circle cx="45.2" cy="128.9" r="1.1" fill="#c9a47c" opacity="0.7"/>
<circle cx="28.7" cy="61.7" r="1.1" fill="#2a1d14" opacity="0.7"/>
<circle cx="78.9" cy="3.0" r="0.8" fill="#241911" opacity="0.7"/>
<circle cx="69.7" cy="113.6" r="0.5" fill="#3a281b" opacity="0.7"/>
<circle cx="92.5" cy="122.7" r="1.1" fill="#3a281b" opacity="0.7"/>
<circle cx="54.6" cy="56.8" r="0.4" fill="#8a6548" opacity="0.7"/>
<circle cx="22.4" cy="63.0" r="0.5" fill="#a98060" opacity="0.7"/>
<circle cx="200.6" cy="7.8" r="1.1" fill="#6d4d35" opacity="0.7"/>
<circle cx="114.8" cy="115.3" r="0.6" fill="#b38d66" opacity="0.7"/>
<circle cx="41.3" cy="50.3" r="1.2" fill="#6b4c34" opacity="0.7"/>
<circle cx="189.6" cy="13.5" r="0.7" fill="#5a3f2c" opacity="0.7"/>
<circle cx="33.2" cy="114.9" r="0.5" fill="#c9a47c" opacity="0.7"/>
<circle cx="104.1" cy="70.5" r="0.4" fill="#a98060" opacity="0.7"/>
<circle cx="170.6" cy="72.7" r="0.7" fill="#8a6548" opacity="0.7"/>
<circle cx="8.3" cy="56.4" r="0.9" fill="#6b4c34" opacity="0.7"/>
<circle cx="28.3" cy="24.9" r="1.0" fill="#241911" opacity="0.7"/>
<circle cx="40.3" cy="10.9" r="1.1" fill="#241911" opacity="0.7"/>
<circle cx="149.8" cy="105.1" r="0.6" fill="#5e4230" opacity="0.7"/>
<circle cx="125.5" cy="97.7" r="0.9" fill="#8a6548" opacity="0.7"/>
<circle cx="41.5" cy="9.1" r="0.8" fill="#6d4d35" opacity="0.7"/>
<circle cx="172.4" cy="126.4" r="1.0" fill="#9a7453" opacity="0.7"/>
<circle cx="68.7" cy="116.2" r="0.5" fill="#3a281b" opacity="0.7"/>
<circle cx="84.0" cy="105.3" r="1.1" fill="#5e4230" opacity="0.7"/>
<circle cx="54.6" cy="25.7" r="0.4" fill="#5a3f2c" opacity="0.7"/>
<circle cx="144.0" cy="79.3" r="0.7" fill="#2a1d14" opacity="0.7"/>
<circle cx="191.1" cy="133.7" r="0.5" fill="#b38d66" opacity="0.7"/>
<circle cx="146.5" cy="112.7" r="1.0" fill="#c9a47c" opacity="0.7"/>
<circle cx="178.0" cy="79.5" r="0.6" fill="#2a1d14" opacity="0.7"/>
<circle cx="22.1" cy="100.9" r="0.8" fill="#3a281b" opacity="0.7"/>
<circle cx="108.8" cy="74.2" r="0.6" fill="#2a1d14" opacity="0.7"/>
<circle cx="18.2" cy="85.4" r="0.5" fill="#8a6548" opacity="0.7"/>
<circle cx="51.3" cy="112.8" r="0.4" fill="#b38d66" opacity="0.7"/>
<circle cx="189.9" cy="101.9" r="0.4" fill="#c9a47c" opacity="0.7"/>
<circle cx="122.9" cy="79.6" r="0.6" fill="#1f150e" opacity="0.7"/>
<circle cx="19.3" cy="24.7" r="0.5" fill="#5a3f2c" opacity="0.7"/>
<circle cx="101.2" cy="69.1" r="0.5" fill="#6b4c34" opacity="0.7"/>
<circle cx="24.9" cy="122.1" r="0.9" fill="#9a7453" opacity="0.7"/>
<circle cx="176.5" cy="20.3" r="0.8" fill="#6d4d35" opacity="0.7"/>
<circle cx="81.3" cy="130.9" r="1.2" fill="#b38d66" opacity="0.7"/>
<circle cx="172.1" cy="72.5" r="1.2" fill="#a98060" opacity="0.7"/>
<circle cx="10.7" cy="50.1" r="0.6" fill="#a98060" opacity="0.7"/>
<circle cx="201.2" cy="111.0" r="1.1" fill="#c9a47c" opacity="0.7"/>
<circle cx="173.8" cy="7.4" r="0.5" fill="#6d4d35" opacity="0.7"/>
<circle cx="178.5" cy="91.5" r="0.7" fill="#2a1d14" opacity="0.7"/>
<circle cx="108.8" cy="9.6" r="0.6" fill="#5a3f2c" opacity="0.7"/>
<circle cx="204.5" cy="62.6" r="1.0" fill="#2a1d14" opacity="0.7"/>
<circle cx="181.3" cy="122.1" r="1.1" fill="#b38d66" opacity="0.7"/>
<circle cx="127.3" cy="126.7" r="0.6" fill="#9a7453" opacity="0.7"/>
<circle cx="111.2" cy="127.6" r="0.5" fill="#9a7453" opacity="0.7"/>
<circle cx="24.9" cy="1.9" r="1.2" fill="#241911" opacity="0.7"/>
<circle cx="58.9" cy="42.1" r="0.5" fill="#8a6548" opacity="0.7"/>
<circle cx="121.8" cy="131.9" r="1.1" fill="#9a7453" opacity="0.7"/>
<circle cx="17.3" cy="81.5" r="0.8" fill="#8a6548" opacity="0.7"/>
<circle cx="104.9" cy="122.2" r="0.9" fill="#3a281b" opacity="0.7"/>
<circle cx="56.2" cy="101.6" r="0.6" fill="#9a7453" opacity="0.7"/>
<circle cx="93.1" cy="95.9" r="0.9" fill="#8a6548" opacity="0.7"/>
<circle cx="41.2" cy="98.0" r="1.1" fill="#a98060" opacity="0.7"/>
<circle cx="62.3" cy="65.9" r="0.4" fill="#6b4c34" opacity="0.7"/>
<circle cx="111.9" cy="133.8" r="0.4" fill="#3a281b" opacity="0.7"/>
<circle cx="72.3" cy="118.9" r="0.7" fill="#5e4230" opacity="0.7"/>
<circle cx="180.1" cy="29.8" r="1.0" fill="#241911" opacity="0.7"/>
<circle cx="32.5" cy="9.2" r="0.8" fill="#5a3f2c" opacity="0.7"/>
<circle cx="12.7" cy="53.5" r="0.7" fill="#a98060" opacity="0.7"/>
<circle cx="156.4" cy="71.9" r="0.7" fill="#8a6548" opacity="0.7"/>
<circle cx="41.5" cy="84.3" r="1.1" fill="#6b4c34" opacity="0.7"/>
<circle cx="106.1" cy="101.9" r="0.6" fill="#3a281b" opacity="0.7"/>
<circle cx="129.3" cy="87.2" r="0.7" fill="#8a6548" opacity="0.7"/>
<circle cx="21.2" cy="56.6" r="0.9" fill="#1f150e" opacity="0.7"/>
<circle cx="102.1" cy="132.9" r="0.5" fill="#9a7453" opacity="0.7"/>
<circle cx="127.4" cy="15.3" r="1.0" fill="#5a3f2c" opacity="0.7"/>
<circle cx="59.1" cy="48.7" r="0.7" fill="#6b4c34" opacity="0.7"/>
<circle cx="66.0" cy="108.6" r="0.7" fill="#3a281b" opacity="0.7"/>
<circle cx="61.5" cy="74.1" r="0.7" fill="#8a6548" opacity="0.7"/>
<circle cx="198.6" cy="83.9" r="1.2" fill="#8a6548" opacity="0.7"/>
<circle cx="41.9" cy="58.8" r="0.4" fill="#2a1d14" opacity="0.7"/>
<circle cx="52.6" cy="123.6" r="1.1" fill="#c9a47c" opacity="0.7"/>
<circle cx="158.6" cy="74.3" r="0.8" fill="#a98060" opacity="0.7"/>
<circle cx="106.0" cy="94.6" r="0.8" fill="#a98060" opacity="0.7"/>
<circle cx="8.3" cy="93.3" r="1.2" fill="#a98060" opacity="0.7"/>
<circle cx="138.7" cy="72.5" r="0.7" fill="#2a1d14" opacity="0.7"/>
<circle cx="102.7" cy="89.5" r="0.5" fill="#1f150e" opacity="0.7"/>
<circle cx="38.6" cy="58.1" r="0.8" fill="#a98060" opacity="0.7"/>
<circle cx="128.0" cy="137.5" r="1.0" fill="#c9a47c" opacity="0.7"/>
<circle cx="153.0" cy="12.7" r="0.7" fill="#5a3f2c" opacity="0.7"/>
<circle cx="200.6" cy="114.0" r="0.5" fill="#9a7453" opacity="0.7"/>
<circle cx="70.4" cy="129.1" r="1.1" fill="#9a7453" opacity="0.7"/>
<circle cx="59.4" cy="70.6" r="1.1" fill="#1f150e" opacity="0.7"/>
<circle cx="84.5" cy="8.3" r="0.9" fill="#6d4d35" opacity="0.7"/>
<circle cx="72.4" cy="137.1" r="1.0" fill="#b38d66" opacity="0.7"/>
<circle cx="2.2" cy="0.4" r="1.0" fill="#6d4d35" opacity="0.7"/>
<circle cx="0.8" cy="42.0" r="0.9" fill="#2a1d14" opacity="0.7"/>
<circle cx="102.1" cy="76.3" r="1.1" fill="#6b4c34" opacity="0.7"/>
<circle cx="183.6" cy="71.0" r="0.9" fill="#8a6548" opacity="0.7"/>
<circle cx="84.3" cy="16.8" r="0.8" fill="#241911" opacity="0.7"/>
<circle cx="104.4" cy="4.0" r="0.5" fill="#241911" opacity="0.7"/>
<circle cx="107.1" cy="113.6" r="0.7" fill="#9a7453" opacity="0.7"/>
<circle cx="164.1" cy="89.7" r="0.7" fill="#1f150e" opacity="0.7"/>
<circle cx="34.7" cy="36.8" r="1.1" fill="#2a1d14" opacity="0.7"/>
<circle cx="194.3" cy="8.7" r="0.8" fill="#241911" opacity="0.7"/>
<circle cx="79.1" cy="7.5" r="0.9" fill="#5a3f2c" opacity="0.7"/>
<circle cx="196.7" cy="60.7" r="0.6" fill="#1f150e" opacity="0.7"/>
<circle cx="45.7" cy="22.0" r="1.1" fill="#6d4d35" opacity="0.7"/>
<circle cx="64.5" cy="124.0" r="0.6" fill="#3a281b" opacity="0.7"/>
<circle cx="123.5" cy="132.5" r="1.2" fill="#3a281b" opacity="0.7"/>
<circle cx="13.8" cy="93.5" r="0.6" fill="#1f150e" opacity="0.7"/>
<circle cx="63.4" cy="120.8" r="0.4" fill="#3a281b" opacity="0.7"/>
<circle cx="178.0" cy="12.1" r="0.7" fill="#241911" opacity="0.7"/>
<circle cx="38.2" cy="134.1" r="0.7" fill="#c9a47c" opacity="0.7"/>
<circle cx="178.7" cy="46.4" r="1.2" fill="#2a1d14" opacity="0.7"/>
<circle cx="86.6" cy="126.0" r="0.6" fill="#9a7453" opacity="0.7"/>
<circle cx="39.2" cy="39.1" r="0.7" fill="#8a6548" opacity="0.7"/>
<circle cx="57.2" cy="3.5" r="0.6" fill="#241911" opacity="0.7"/>
<circle cx="26.6" cy="27.1" r="1.1" fill="#6d4d35" opacity="0.7"/>
<circle cx="26.2" cy="61.2" r="0.5" fill="#8a6548" opacity="0.7"/>
<circle cx="72.3" cy="99.7" r="0.9" fill="#a98060" opacity="0.7"/>
<circle cx="176.0" cy="93.2" r="0.9" fill="#6b4c34" opacity="0.7"/>
<circle cx="90.3" cy="136.6" r="0.6" fill="#9a7453" opacity="0.7"/>
<circle cx="178.8" cy="16.9" r="0.5" fill="#6d4d35" opacity="0.7"/>
<circle cx="174.6" cy="101.6" r="0.4" fill="#3a281b" opacity="0.7"/>
<circle cx="3.1" cy="98.1" r="1.0" fill="#8a6548" opacity="0.7"/>
<circle cx="47.5" cy="26.0" r="0.5" fill="#241911" opacity="0.7"/>
<circle cx="187.3" cy="111.1" r="0.6" fill="#c9a47c" opacity="0.7"/>
<circle cx="147.3" cy="12.1" r="0.5" fill="#5a3f2c" opacity="0.7"/>
<circle cx="82.7" cy="125.4" r="1.1" fill="#5e4230" opacity="0.7"/>
<circle cx="36.2" cy="50.6" r="1.1" fill="#6b4c34" opacity="0.7"/>
<circle cx="5.2" cy="97.1" r="0.6" fill="#a98060" opacity="0.7"/>
<circle cx="23.6" cy="126.0" r="1.0" fill="#5e4230" opacity="0.7"/>
<circle cx="8.3" cy="5.5" r="0.7" fill="#241911" opacity="0.7"/>
<circle cx="151.4" cy="76.2" r="0.9" fill="#8a6548" opacity="0.7"/>
<circle cx="46.7" cy="68.7" r="0.6" fill="#1f150e" opacity="0.7"/>
<circle cx="89.2" cy="94.4" r="1.1" fill="#6b4c34" opacity="0.7"/>
<circle cx="22.9" cy="105.4" r="1.1" fill="#c9a47c" opacity="0.7"/>
<circle cx="179.4" cy="80.7" r="1.2" fill="#2a1d14" opacity="0.7"/>
<circle cx="139.6" cy="5.1" r="0.6" fill="#5a3f2c" opacity="0.7"/>
<circle cx="187.5" cy="103.4" r="0.7" fill="#b38d66" opacity="0.7"/>
<circle cx="152.5" cy="137.7" r="1.1" fill="#9a7453" opacity="0.7"/>
<circle cx="57.6" cy="12.4" r="0.8" fill="#5a3f2c" opacity="0.7"/>
<circle cx="69.8" cy="69.4" r="0.8" fill="#a98060" opacity="0.7"/>
<circle cx="138.0" cy="116.8" r="0.8" fill="#5e4230" opacity="0.7"/>
<circle cx="38.8" cy="131.4" r="0.6" fill="#9a7453" opacity="0.7"/>
<circle cx="112.0" cy="133.8" r="0.8" fill="#5e4230" opacity="0.7"/>
<circle cx="51.2" cy="8.2" r="0.7" fill="#5a3f2c" opacity="0.7"/>
<circle cx="19.0" cy="87.8" r="0.5" fill="#8a6548" opacity="0.7"/>
<circle cx="144.9" cy="92.5" r="1.0" fill="#8a6548" opacity="0.7"/>
<circle cx="1.2" cy="95.4" r="1.1" fill="#8a6548" opacity="0.7"/>
<circle cx="181.4" cy="19.6" r="0.6" fill="#6d4d35" opacity="0.7"/>
<circle cx="129.0" cy="16.3" r="1.0" fill="#5a3f2c" opacity="0.7"/>
<circle cx="34.7" cy="92.0" r="1.2" fill="#1f150e" opacity="0.7"/>
<circle cx="42.3" cy="95.2" r="0.7" fill="#2a1d14" opacity="0.7"/>
<circle cx="42.3" cy="8.3" r="0.6" fill="#5a3f2c" opacity="0.7"/>
<circle cx="22.7" cy="42.6" r="0.5" fill="#2a1d14" opacity="0.7"/>
<circle cx="91.2" cy="78.5" r="0.5" fill="#6b4c34" opacity="0.7"/>
<circle cx="14.7" cy="1.5" r="0.5" fill="#5a3f2c" opacity="0.7"/>
<circle cx="147.0" cy="135.3" r="0.6" fill="#9a7453" opacity="0.7"/>
<circle cx="132.2" cy="132.0" r="0.6" fill="#3a281b" opacity="0.7"/>
<circle cx="111.3" cy="1.1" r="0.9" fill="#241911" opacity="0.7"/>
<circle cx="128.7" cy="129.1" r="0.9" fill="#c9a47c" opacity="0.7"/>
<circle cx="16.0" cy="103.1" r="1.0" fill="#b38d66" opacity="0.7"/>
<circle cx="38.1" cy="88.1" r="0.5" fill="#8a6548" opacity="0.7"/>
<circle cx="47.2" cy="18.8" r="1.1" fill="#5a3f2c" opacity="0.7"/>
<circle cx="52.0" cy="8.0" r="0.9" fill="#241911" opacity="0.7"/>
<circle cx="128.8" cy="113.1" r="1.1" fill="#3a281b" opacity="0.7"/>
<circle cx="193.7" cy="68.2" r="1.0" fill="#a98060" opacity="0.7"/>
<circle cx="204.1" cy="83.2" r="0.5" fill="#2a1d14" opacity="0.7"/>
<ellipse cx="92.7" cy="80.8" rx="6.6" ry="2.2" fill="#75553a" opacity="0.45"/>
<ellipse cx="164.8" cy="69.8" rx="5.1" ry="1.5" fill="#2e2016" opacity="0.45"/>
<ellipse cx="166.0" cy="98.1" rx="2.2" ry="3.5" fill="#2e2016" opacity="0.45"/>
<ellipse cx="134.1" cy="88.0" rx="2.8" ry="1.0" fill="#75553a" opacity="0.45"/>
<ellipse cx="12.9" cy="12.6" rx="6.4" ry="2.5" fill="#2e2016" opacity="0.45"/>
<ellipse cx="66.9" cy="84.8" rx="3.0" ry="1.6" fill="#a07850" opacity="0.45"/>
<ellipse cx="102.5" cy="94.1" rx="4.3" ry="1.7" fill="#75553a" opacity="0.45"/>
<ellipse cx="204.1" cy="117.2" rx="5.5" ry="1.8" fill="#7a5a3e" opacity="0.45"/>
<ellipse cx="105.1" cy="11.9" rx="4.8" ry="1.3" fill="#8e6a4a" opacity="0.45"/>
<ellipse cx="196.4" cy="118.2" rx="2.0" ry="1.5" fill="#c09a70" opacity="0.45"/>
<ellipse cx="96.3" cy="135.4" rx="4.0" ry="1.2" fill="#7a5a3e" opacity="0.45"/>
<ellipse cx="17.9" cy="51.2" rx="6.8" ry="2.9" fill="#8e6a4a" opacity="0.45"/>
<ellipse cx="27.6" cy="99.9" rx="2.1" ry="2.2" fill="#2e2016" opacity="0.45"/>
<ellipse cx="36.4" cy="80.7" rx="4.2" ry="1.5" fill="#3e2b1e" opacity="0.45"/>
<ellipse cx="80.9" cy="136.7" rx="2.0" ry="3.2" fill="#a8845c" opacity="0.45"/>
<ellipse cx="204.6" cy="10.6" rx="2.9" ry="3.5" fill="#75553a" opacity="0.45"/>
<ellipse cx="202.8" cy="35.7" rx="3.3" ry="2.9" fill="#a07850" opacity="0.45"/>
<ellipse cx="15.2" cy="35.1" rx="5.2" ry="1.0" fill="#a07850" opacity="0.45"/>
<ellipse cx="76.2" cy="66.9" rx="6.8" ry="2.2" fill="#75553a" opacity="0.45"/>
<ellipse cx="27.8" cy="58.2" rx="5.1" ry="1.8" fill="#3e2b1e" opacity="0.45"/>
<ellipse cx="38.9" cy="104.1" rx="6.7" ry="1.5" fill="#5a4030" opacity="0.45"/>
<ellipse cx="180.8" cy="86.5" rx="4.1" ry="1.3" fill="#8e6a4a" opacity="0.45"/>
<ellipse cx="86.3" cy="125.6" rx="4.5" ry="2.3" fill="#c09a70" opacity="0.45"/>
<ellipse cx="25.9" cy="70.3" rx="5.3" ry="2.5" fill="#8e6a4a" opacity="0.45"/>
<ellipse cx="57.4" cy="127.3" rx="3.0" ry="1.0" fill="#a8845c" opacity="0.45"/>
<ellipse cx="9.6" cy="44.7" rx="4.7" ry="3.4" fill="#8e6a4a" opacity="0.45"/>
<ellipse cx="74.2" cy="123.8" rx="6.9" ry="2.6" fill="#7a5a3e" opacity="0.45"/>
<ellipse cx="120.9" cy="128.1" rx="4.4" ry="1.9" fill="#a8845c" opacity="0.45"/>
<ellipse cx="197.4" cy="10.8" rx="5.2" ry="2.2" fill="#a07850" opacity="0.45"/>
<ellipse cx="65.4" cy="137.9" rx="2.4" ry="2.4" fill="#c09a70" opacity="0.45"/>
<ellipse cx="184.5" cy="103.8" rx="5.5" ry="3.0" fill="#a8845c" opacity="0.45"/>
<ellipse cx="72.1" cy="97.1" rx="6.5" ry="3.2" fill="#2e2016" opacity="0.45"/>
<ellipse cx="193.6" cy="11.9" rx="4.5" ry="1.0" fill="#2e2016" opacity="0.45"/>
<ellipse cx="77.7" cy="9.6" rx="2.4" ry="1.2" fill="#8e6a4a" opacity="0.45"/>
<ellipse cx="203.6" cy="122.4" rx="5.6" ry="2.0" fill="#5a4030" opacity="0.45"/>
<ellipse cx="90.3" cy="117.0" rx="2.4" ry="2.9" fill="#c09a70" opacity="0.45"/>
<ellipse cx="4.6" cy="132.5" rx="2.6" ry="2.9" fill="#5a4030" opacity="0.45"/>
<ellipse cx="52.4" cy="9.5" rx="3.5" ry="2.7" fill="#3e2b1e" opacity="0.45"/>
<ellipse cx="106.3" cy="106.0" rx="3.7" ry="3.3" fill="#5a4030" opacity="0.45"/>
<ellipse cx="182.8" cy="50.5" rx="5.3" ry="1.5" fill="#2e2016" opacity="0.45"/>
<ellipse cx="164.8" cy="106.1" rx="3.0" ry="1.5" fill="#7a5a3e" opacity="0.45"/>
<ellipse cx="27.9" cy="72.5" rx="6.2" ry="3.1" fill="#8e6a4a" opacity="0.45"/>
<ellipse cx="194.8" cy="44.0" rx="2.8" ry="2.1" fill="#a07850" opacity="0.45"/>
<ellipse cx="189.8" cy="116.0" rx="3.9" ry="2.3" fill="#a8845c" opacity="0.45"/>
<ellipse cx="146.8" cy="117.4" rx="5.1" ry="1.8" fill="#c09a70" opacity="0.45"/>
<ellipse cx="57.0" cy="87.0" rx="5.4" ry="1.7" fill="#a07850" opacity="0.45"/>
<ellipse cx="63.4" cy="110.9" rx="2.1" ry="1.3" fill="#5a4030" opacity="0.45"/>
<ellipse cx="38.9" cy="108.0" rx="3.3" ry="2.9" fill="#c09a70" opacity="0.45"/>
<ellipse cx="201.7" cy="23.0" rx="2.5" ry="2.3" fill="#a07850" opacity="0.45"/>
<ellipse cx="196.5" cy="97.0" rx="3.0" ry="2.2" fill="#3e2b1e" opacity="0.45"/>
<ellipse cx="146.4" cy="106.2" rx="4.7" ry="1.1" fill="#7a5a3e" opacity="0.45"/>
<ellipse cx="55.8" cy="52.9" rx="5.5" ry="2.3" fill="#75553a" opacity="0.45"/>
<ellipse cx="204.3" cy="28.7" rx="6.2" ry="2.7" fill="#3e2b1e" opacity="0.45"/>
<ellipse cx="17.9" cy="129.2" rx="5.6" ry="1.3" fill="#5a4030" opacity="0.45"/>
<ellipse cx="40.4" cy="123.4" rx="2.0" ry="2.4" fill="#a8845c" opacity="0.45"/>
<ellipse cx="95.1" cy="92.7" rx="3.0" ry="2.8" fill="#8e6a4a" opacity="0.45"/>
<ellipse cx="43.7" cy="125.0" rx="6.9" ry="3.4" fill="#a8845c" opacity="0.45"/>
<ellipse cx="53.7" cy="101.4" rx="2.1" ry="2.3" fill="#c09a70" opacity="0.45"/>
<ellipse cx="90.4" cy="79.5" rx="5.8" ry="2.2" fill="#8e6a4a" opacity="0.45"/>
<ellipse cx="44.8" cy="120.8" rx="4.1" ry="1.1" fill="#a8845c" opacity="0.45"/>
<ellipse cx="140.7" cy="127.1" rx="4.4" ry="3.5" fill="#5a4030" opacity="0.45"/>
<ellipse cx="193.9" cy="72.0" rx="6.7" ry="1.2" fill="#3e2b1e" opacity="0.45"/>
<ellipse cx="90.1" cy="80.6" rx="6.2" ry="2.4" fill="#3e2b1e" opacity="0.45"/>
<ellipse cx="107.2" cy="117.7" rx="4.8" ry="1.8" fill="#5a4030" opacity="0.45"/>
<ellipse cx="195.7" cy="121.1" rx="5.0" ry="1.8" fill="#7a5a3e" opacity="0.45"/>
<ellipse cx="198.5" cy="76.1" rx="4.9" ry="1.5" fill="#75553a" opacity="0.45"/>
<ellipse cx="23.4" cy="8.6" rx="3.9" ry="2.3" fill="#8e6a4a" opacity="0.45"/>
<ellipse cx="164.2" cy="81.2" rx="4.5" ry="2.7" fill="#8e6a4a" opacity="0.45"/>
<ellipse cx="190.8" cy="67.7" rx="6.6" ry="3.0" fill="#2e2016" opacity="0.45"/>
<ellipse cx="55.2" cy="69.5" rx="2.6" ry="2.1" fill="#2e2016" opacity="0.45"/>
<ellipse cx="86.0" cy="11.8" rx="3.3" ry="2.8" fill="#8e6a4a" opacity="0.45"/>
<ellipse cx="7.3" cy="28.2" rx="2.1" ry="1.7" fill="#a07850" opacity="0.45"/>
<ellipse cx="50.1" cy="72.8" rx="4.5" ry="2.5" fill="#75553a" opacity="0.45"/>
<ellipse cx="127.8" cy="101.3" rx="5.5" ry="3.2" fill="#c09a70" opacity="0.45"/>
<path d="M14 92 L46 64 M10 98 L36 78 M155 108 L200 96 M150 40 L180 20" stroke="#b8926c" stroke-width="0.8" opacity="0.7"/>
<path d="M36 30 Q42 25 48 25 L58 25 Q60 23 62 23 Q75 19 85 18 L137 17 Q150 17 155 18 Q166 24 168 32 Q172 44 174 55 Q180 64 185 74 Q190 84 192 92 Q195 98 195 104 L189 106 Q187 98 184 92 Q180 85 176 80 Q170 72 165 68 L161 65 Q156 64 152 64 Q150 72 150 80 Q152 92 152 100 Q151 108 150 114 L138 116 Q140 108 140 100 Q138 90 134 80 Q132 72 130 64 L124 63 Q114 64 107 70 Q106 80 105 90 Q104 104 104 117 L92 118 Q91 106 91 95 Q90 84 90 74 Q82 76 75 76 Q68 78 64 82 Q58 92 52 100 Q48 106 44 112 Q41 116 38 117 L30 117 Q30 114 32 112 Q36 106 40 100 Q43 90 46 80 Q48 72 50 66 Q48 63 46 62 Q40 60 38 58 Q34 52 34 45 Q34 36 36 30 Z" fill="url(#tg)"/>
<path d="M70 40 Q90 50 110 44 Q130 52 160 46 L162 58 Q130 62 110 60 Q90 64 72 58 Z" fill="#f0c98a" opacity="0.35"/>
<path d="M50 64 Q60 70 74 66 Q78 72 75 76 Q68 78 64 82 Q58 92 52 100 Q48 106 44 112 L38 114 Q42 104 46 92 Q50 78 50 64 Z" fill="#f1e2c4"/>
<path d="M130 64 L152 64 Q150 72 150 80 Q152 92 152 100 Q151 108 150 114 L138 116 Q140 108 140 100 Q138 90 134 80 Q132 72 130 64 Z" fill="#ead6b0"/>
<path d="M37 46 Q44 56 50 58 Q56 60 61 55 L60 62 Q50 65 41 60 Z" fill="#f3ead8"/>
<path d="M45 40 Q51 46 50 56 L44 56 Q42 48 45 40 Z" fill="#c46e22"/>
<circle cx="38" cy="29" r="3" fill="#e4d4bc"/><circle cx="59" cy="27" r="3" fill="#e4d4bc"/>
<g stroke="#1a120b" fill="none" stroke-linecap="round">
<path d="M63.0 23.3 Q67.0 35.8 66.0 48.2" stroke-width="1.2"/>
<path d="M67.0 22.4 Q69.1 36.4 68.1 50.4" stroke-width="1.4"/>
<path d="M72.0 21.3 Q74.2 33.4 73.2 45.4" stroke-width="1.5"/>
<path d="M76.0 20.5 Q78.4 34.8 77.4 49.2" stroke-width="1.8"/>
<path d="M80.3 19.5 Q84.1 35.4 83.1 51.3" stroke-width="2.0"/>
<path d="M85.1 18.5 Q89.7 36.6 88.7 54.8" stroke-width="1.1"/>
<path d="M89.6 18.4 Q92.5 32.4 91.5 46.4" stroke-width="1.2"/>
<path d="M95.4 18.3 Q99.3 35.2 98.3 52.2" stroke-width="1.6"/>
<path d="M100.0 18.2 Q102.2 37.4 101.2 56.6" stroke-width="1.2"/>
<path d="M104.3 18.1 Q107.3 38.1 106.3 58.2" stroke-width="1.5"/>
<path d="M109.5 18.0 Q113.9 36.7 112.9 55.4" stroke-width="1.4"/>
<path d="M115.0 17.9 Q118.6 35.4 117.6 52.9" stroke-width="1.6"/>
<path d="M120.9 17.8 Q125.9 38.3 124.9 58.8" stroke-width="1.4"/>
<path d="M125.0 17.7 Q127.5 36.4 126.5 55.0" stroke-width="1.8"/>
<path d="M130.0 17.6 Q134.3 34.1 133.3 50.5" stroke-width="1.7"/>
<path d="M135.2 17.5 Q139.2 40.1 138.2 62.8" stroke-width="1.4"/>
<path d="M140.4 17.7 Q144.9 38.7 143.9 59.8" stroke-width="1.5"/>
<path d="M146.4 18.0 Q148.6 38.4 147.6 58.7" stroke-width="1.7"/>
<path d="M151.9 18.3 Q156.4 39.4 155.4 60.5" stroke-width="2.0"/>
<path d="M156.4 20.0 Q158.5 38.9 157.5 57.9" stroke-width="1.7"/>
<path d="M161.3 25.3 Q163.5 40.5 162.5 55.7" stroke-width="1.2"/>
<path d="M167.0 31.4 Q170.1 43.3 169.1 55.3" stroke-width="1.3"/>
<path d="M40 36 L46 38 M52 36 L58 34 M38 44 L42 46 M56 42 L61 40 M61 30 Q64 40 62 52 M36 38 L39 40" stroke-width="1.1"/>
<path d="M52 72 Q56 74 58 78 M48 84 Q53 86 55 90 M45 96 Q49 98 51 101 M41 106 Q45 108 46 111" stroke-width="1.6"/>
<path d="M132 72 Q140 74 150 72 M134 82 Q142 84 151 82 M136 92 Q144 94 152 92 M138 102 Q144 104 151 102 M139 110 Q145 112 150 110" stroke-width="1.5"/>
<path d="M176 66 Q182 68 184 74 M180 78 Q186 80 189 86 M184 88 Q189 90 192 95 M172 58 Q176 60 178 64" stroke-width="1.6"/>
<path d="M90 74 Q96 66 107 70" stroke-width="1"/>
</g>
<path d="M150 28 Q164 32 170 52 Q160 60 150 56 Z" fill="#1a120b" opacity="0.15"/>
</svg>
<div class="a" style="left:795px;top:443.5px;width:206px;text-align:center;font-size:9.5px;line-height:12px;color:#202122">(<i>P. tigris tigris</i>)</div>
<div class="ib-h" style="top:461px;height:18px;font-size:11.4px;line-height:18px;color:#ba3b2b">Амандық күйі</div>
<!-- status -->
<div class="a" style="left:813.5px;top:491px;font-size:8.1px;line-height:8px;color:#555">Extinct</div>
<div class="a" style="left:875px;top:491px;font-size:8.1px;line-height:8px;color:#555">Threatened</div>
<div class="a" style="left:951px;top:483px;width:32px;text-align:center;font-size:8.1px;line-height:8px;color:#555">Least<br>Concern</div>
<div class="a" style="left:824.5px;top:498px;width:1px;height:5px;background:#777"></div>
<div class="a" style="left:967px;top:498px;width:1px;height:5px;background:#777"></div>
<svg class="a" style="left:862px;top:498px" width="68" height="8" viewBox="0 0 68 8"><path d="M1 7 Q1 3 6 3 L30 3 Q34 3 34 0.5 Q34 3 38 3 L62 3 Q67 3 67 7" stroke="#222" stroke-width="1.1" fill="none"/></svg>
<div class="circ" style="left:815px;top:507px">EX</div>
<div class="circ" style="left:839px;top:507px">EW</div>
<div class="circ" style="left:863px;top:507px">CR</div>
<div class="circ" style="left:887px;top:507px;background:#cc5a24;border-color:#cc5a24;color:#f5c8a8">EN</div>
<div class="circ" style="left:911px;top:507px">VU</div>
<div class="circ" style="left:935px;top:507px">NT</div>
<div class="circ" style="left:958px;top:507px">LC</div>
<div class="a" style="left:815.5px;top:532px;font-size:11.4px;line-height:12px;color:#ba3b2b">Жойылу қаупіндегілер <span style="font-size:9.5px;color:#54595d">(<span class="l" style="color:#ba3b2b">IUCN</span>)</span> <sup class="l" style="font-size:8px;vertical-align:4px;line-height:0">[1]</sup></div>
<div class="ib-h" style="top:550px;height:18px;font-size:11.4px;line-height:18px;color:#ba3b2b">Ғылыми топтастыруы</div>
<div class="ibl" style="top:577px;line-height:12px">Дүниесі:</div><div class="ibv l" style="top:577px;line-height:12px">Жануарлар</div>
<div class="ibl" style="top:599px;line-height:12px">Жамағаты:</div><div class="ibv l" style="top:599px;line-height:12px">Хордалылар</div>
<div class="ibl" style="top:621px;line-height:12px">Табы:</div><div class="ibv l" style="top:621px;line-height:12px">Сүтқоректілер</div>
<div class="ibl" style="top:643px;line-height:12px">Сабы:</div><div class="ibv l" style="top:643px;line-height:12px">Жыртқыштар</div>
<div class="ibl" style="top:665px;line-height:12px">Тұқымдасы:</div><div class="ibv l" style="top:665px;line-height:12px">Мысықтәрізділер</div>
<div class="ibl" style="top:687px;line-height:12px">Тегі:</div><div class="ibv l" style="top:687px;line-height:12px;font-style:italic">Panthera</div>
<div class="ibl" style="top:709px;line-height:12px">Түрі:</div><div class="ibv" style="top:709px;line-height:12px;font-style:italic;font-weight:bold">P. tigris</div>
<div class="ib-h" style="top:729px;height:19px;font-size:11.4px;line-height:18px;color:#ba3b2b">Екі-есімді атауы</div>


<!-- ===== CONTEXT MENU ===== -->
<div class="a" style="left:496px;top:346px;width:230px;height:239px;background:#f0f0f0;border:1px solid #cfcfcf;box-shadow:1px 1px 2px rgba(0,0,0,0.08)"></div>
<div class="a" style="left:494px;top:392px;width:234px;height:26px;border:4.6px solid #fcbf0d;background:#f0f0f0"></div>
<div class="mi" style="top:353px">Сілтемені жаңа қойыншада ашу</div>
<div class="mi" style="top:375px">Сілтемені жаңа терезеде ашу</div>
<div class="mi" style="top:397px">Сілтемені Инкогнито режимінде ашу</div>
<div class="mi" style="top:418px">Сілтемені топта ашу...</div><div class="arr" style="top:420.5px"></div>
<div class="mi" style="top:440px">Сілтемені профильде ашу...</div><div class="arr" style="top:442.5px"></div>
<div class="msep" style="top:460px"></div>
<div class="mi" style="top:467px">Сілтемені сақтау әдісі...</div>
<div class="mi" style="top:489px">Сілтемені бетбелгілерге қосу</div>
<div class="mi" style="top:511px">Сілтеменің мекенжайын көшіру</div>
<div class="msep" style="top:531px"></div>
<svg class="a" style="left:511px;top:537px" width="14" height="16" viewBox="0 0 14 16"><path d="M7 0.5 L13.3 2.6 V7.5 Q13.3 12.6 7 15.5 Q0.7 12.6 0.7 7.5 V2.6 Z" fill="#e01c24"/><path d="M5 7 V5.6 A2 2 0 0 1 9 5.6 V7" fill="none" stroke="#fff" stroke-width="1.1"/><rect x="4.1" y="7" width="5.8" height="4.6" rx="0.6" fill="#fff"/></svg>
<div class="mi" style="top:538px;left:529px">AdBlocker Ultimate</div><div class="arr" style="top:540.5px"></div>
<div class="msep" style="top:559px"></div>
<div class="mi" style="top:565px">Элементті зерттеу</div>

</body></html>
